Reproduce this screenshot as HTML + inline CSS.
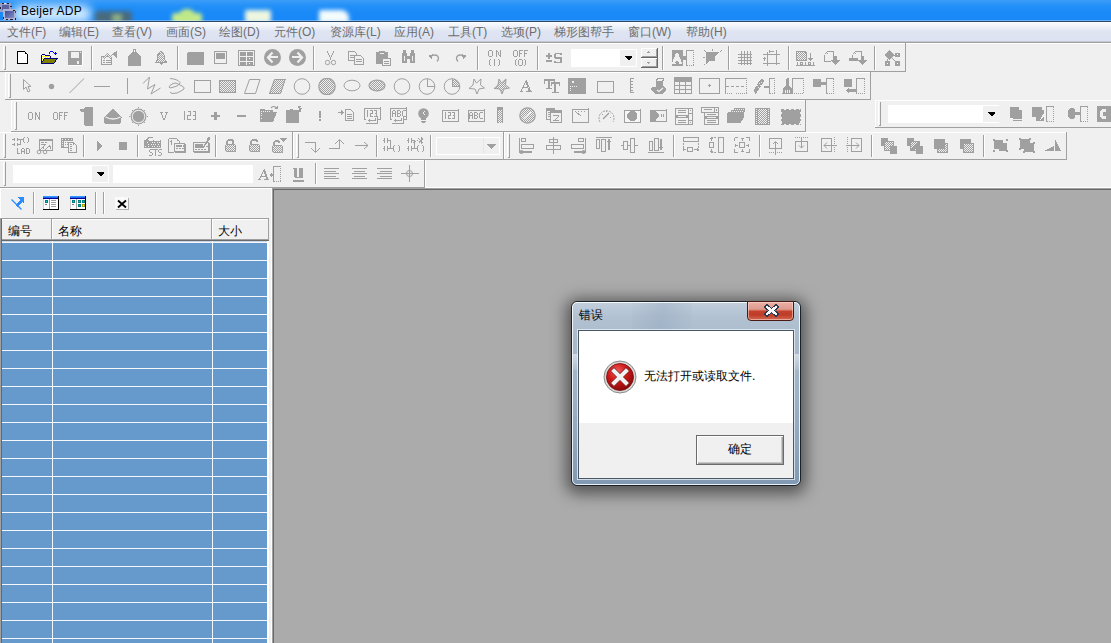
<!DOCTYPE html><html><head><meta charset="utf-8"><style>
html,body{margin:0;padding:0}
body{width:1111px;height:643px;position:relative;overflow:hidden;background:#f0f0f0;font-family:"Liberation Sans",sans-serif}
</style></head><body>
<div style="position:absolute;left:0;top:0;width:1111px;height:22px;overflow:hidden;background:linear-gradient(#3c9cf8 0px,#2290f8 6px,#1a8af8 12px,#1888f8 20px);">
<div style="position:absolute;left:12px;top:5px;width:80px;height:18px;border-radius:9px;background:rgba(235,248,255,0.85);filter:blur(5px)"></div>
<div style="position:absolute;left:95px;top:11px;width:37px;height:12px;border-radius:3px;background:#56625c;filter:blur(2.5px);opacity:.8"></div>
<div style="position:absolute;left:112px;top:14px;width:10px;height:8px;background:#aacc88;filter:blur(2px);opacity:.7"></div>
<div style="position:absolute;left:172px;top:13px;width:30px;height:10px;border-radius:3px;background:#c8ec8a;filter:blur(2px)"></div>
<div style="position:absolute;left:180px;top:9px;width:14px;height:10px;border-radius:50% 50% 0 0;background:#c0e888;filter:blur(2px)"></div>
<div style="position:absolute;left:245px;top:10px;width:26px;height:13px;border-radius:2px;background:#eef6e0;filter:blur(2px)"></div>
<div style="position:absolute;left:319px;top:10px;width:30px;height:13px;border-radius:2px 8px 0 0;background:#f4fbfc;filter:blur(2px)"></div>
<div style="position:absolute;left:0;top:20px;width:1111px;height:1px;background:rgba(255,255,255,0.35)"></div>
</div>
<div style="position:absolute;left:0px;top:21px;width:1111px;height:1px;background:#2c4a6a"></div>
<svg style="position:absolute;left:0px;top:2px" width="17" height="18" viewBox="0 0 17 18" shape-rendering="crispEdges" ><defs><linearGradient id="tsg" x1="0" y1="0" x2="1" y2="1"><stop offset="0" stop-color="#404a90"/><stop offset="1" stop-color="#8090c8"/></linearGradient></defs>
<rect x="0" y="1" width="11" height="9" fill="#9aa0c8"/><rect x="2" y="3" width="7" height="5" fill="#5a62a0"/><rect x="3" y="1" width="3" height="1" fill="#e8e8f8"/>
<rect x="3" y="7" width="13" height="11" fill="#aeb2d4"/><rect x="5" y="9" width="9" height="7" fill="url(#tsg)"/>
<rect x="2" y="1" width="2" height="1" fill="#202030"/><rect x="7" y="1" width="2" height="1" fill="#202030"/><rect x="0" y="5" width="1" height="2" fill="#202030"/><rect x="10" y="4" width="2" height="1" fill="#202030"/>
<rect x="3" y="15" width="1" height="2" fill="#202030"/><rect x="6" y="17" width="2" height="1" fill="#202030"/><rect x="10" y="17" width="3" height="1" fill="#202030"/><rect x="15" y="9" width="1" height="2" fill="#404050"/><rect x="15" y="16" width="1" height="2" fill="#202030"/><rect x="13" y="8" width="2" height="1" fill="#202030"/></svg>
<div style="position:absolute;left:21px;top:4px;white-space:nowrap;font-size:12px;color:#000;letter-spacing:0.3px">Beijer ADP</div>
<div style="position:absolute;left:0px;top:22px;width:1111px;height:19px;background:linear-gradient(#fbfcfe 0px,#eef1f8 5px,#e0e5f3 9px,#dce2f1 18px)"></div>
<div style="position:absolute;left:0px;top:41px;width:1111px;height:1px;background:#c4c8d0"></div>
<div style="position:absolute;left:0px;top:42px;width:1111px;height:1px;background:#a0a0a0"></div>
<div style="position:absolute;left:7px;top:24px;white-space:nowrap;font-size:12px;line-height:16px;color:#6d6d6d;">文件(F)</div>
<div style="position:absolute;left:59px;top:24px;white-space:nowrap;font-size:12px;line-height:16px;color:#6d6d6d;">编辑(E)</div>
<div style="position:absolute;left:112px;top:24px;white-space:nowrap;font-size:12px;line-height:16px;color:#6d6d6d;">查看(V)</div>
<div style="position:absolute;left:166px;top:24px;white-space:nowrap;font-size:12px;line-height:16px;color:#6d6d6d;">画面(S)</div>
<div style="position:absolute;left:219px;top:24px;white-space:nowrap;font-size:12px;line-height:16px;color:#6d6d6d;">绘图(D)</div>
<div style="position:absolute;left:274px;top:24px;white-space:nowrap;font-size:12px;line-height:16px;color:#6d6d6d;">元件(O)</div>
<div style="position:absolute;left:330px;top:24px;white-space:nowrap;font-size:12px;line-height:16px;color:#6d6d6d;">资源库(L)</div>
<div style="position:absolute;left:394px;top:24px;white-space:nowrap;font-size:12px;line-height:16px;color:#6d6d6d;">应用(A)</div>
<div style="position:absolute;left:448px;top:24px;white-space:nowrap;font-size:12px;line-height:16px;color:#6d6d6d;">工具(T)</div>
<div style="position:absolute;left:501px;top:24px;white-space:nowrap;font-size:12px;line-height:16px;color:#6d6d6d;">选项(P)</div>
<div style="position:absolute;left:554px;top:24px;white-space:nowrap;font-size:12px;line-height:16px;color:#6d6d6d;">梯形图帮手</div>
<div style="position:absolute;left:628px;top:24px;white-space:nowrap;font-size:12px;line-height:16px;color:#6d6d6d;">窗口(W)</div>
<div style="position:absolute;left:686px;top:24px;white-space:nowrap;font-size:12px;line-height:16px;color:#6d6d6d;">帮助(H)</div>
<div style="position:absolute;left:0px;top:43px;width:1111px;height:1px;background:#fff"></div>
<div style="position:absolute;left:0px;top:71px;width:906px;height:1px;background:#a0a0a0"></div>
<div style="position:absolute;left:905px;top:43px;width:1px;height:29px;background:#a0a0a0"></div>
<div style="position:absolute;left:3px;top:46px;width:1px;height:23px;background:#fff"></div>
<div style="position:absolute;left:3px;top:46px;width:2px;height:1px;background:#fff"></div>
<div style="position:absolute;left:5px;top:46px;width:1px;height:24px;background:#a0a0a0"></div>
<div style="position:absolute;left:4px;top:69px;width:1px;height:1px;background:#a0a0a0"></div>
<div style="position:absolute;left:5px;top:72px;width:865px;height:1px;background:#fff"></div>
<div style="position:absolute;left:5px;top:72px;width:1px;height:27px;background:#fff"></div>
<div style="position:absolute;left:870px;top:72px;width:1px;height:28px;background:#a0a0a0"></div>
<div style="position:absolute;left:5px;top:99px;width:866px;height:1px;background:#a0a0a0"></div>
<div style="position:absolute;left:8px;top:74px;width:1px;height:23px;background:#fff"></div>
<div style="position:absolute;left:8px;top:74px;width:2px;height:1px;background:#fff"></div>
<div style="position:absolute;left:10px;top:74px;width:1px;height:24px;background:#a0a0a0"></div>
<div style="position:absolute;left:9px;top:97px;width:1px;height:1px;background:#a0a0a0"></div>
<div style="position:absolute;left:11px;top:100px;width:794px;height:1px;background:#fff"></div>
<div style="position:absolute;left:11px;top:100px;width:1px;height:31px;background:#fff"></div>
<div style="position:absolute;left:805px;top:100px;width:1px;height:32px;background:#a0a0a0"></div>
<div style="position:absolute;left:11px;top:131px;width:795px;height:1px;background:#a0a0a0"></div>
<div style="position:absolute;left:14px;top:102px;width:1px;height:27px;background:#fff"></div>
<div style="position:absolute;left:14px;top:102px;width:2px;height:1px;background:#fff"></div>
<div style="position:absolute;left:16px;top:102px;width:1px;height:28px;background:#a0a0a0"></div>
<div style="position:absolute;left:15px;top:129px;width:1px;height:1px;background:#a0a0a0"></div>
<div style="position:absolute;left:875px;top:100px;width:237px;height:1px;background:#fff"></div>
<div style="position:absolute;left:875px;top:100px;width:1px;height:27px;background:#fff"></div>
<div style="position:absolute;left:1112px;top:100px;width:1px;height:28px;background:#a0a0a0"></div>
<div style="position:absolute;left:875px;top:127px;width:238px;height:1px;background:#a0a0a0"></div>
<div style="position:absolute;left:878px;top:102px;width:1px;height:23px;background:#fff"></div>
<div style="position:absolute;left:878px;top:102px;width:2px;height:1px;background:#fff"></div>
<div style="position:absolute;left:880px;top:102px;width:1px;height:24px;background:#a0a0a0"></div>
<div style="position:absolute;left:879px;top:125px;width:1px;height:1px;background:#a0a0a0"></div>
<div style="position:absolute;left:0px;top:132px;width:1066px;height:1px;background:#fff"></div>
<div style="position:absolute;left:0px;top:159px;width:1066px;height:1px;background:#a0a0a0"></div>
<div style="position:absolute;left:1066px;top:132px;width:1px;height:28px;background:#a0a0a0"></div>
<div style="position:absolute;left:3px;top:134px;width:1px;height:23px;background:#fff"></div>
<div style="position:absolute;left:3px;top:134px;width:2px;height:1px;background:#fff"></div>
<div style="position:absolute;left:5px;top:134px;width:1px;height:24px;background:#a0a0a0"></div>
<div style="position:absolute;left:4px;top:157px;width:1px;height:1px;background:#a0a0a0"></div>
<div style="position:absolute;left:292px;top:132px;width:1px;height:27px;background:#a0a0a0"></div>
<div style="position:absolute;left:293px;top:132px;width:1px;height:27px;background:#fff"></div>
<div style="position:absolute;left:296px;top:134px;width:1px;height:23px;background:#fff"></div>
<div style="position:absolute;left:296px;top:134px;width:2px;height:1px;background:#fff"></div>
<div style="position:absolute;left:298px;top:134px;width:1px;height:24px;background:#a0a0a0"></div>
<div style="position:absolute;left:297px;top:157px;width:1px;height:1px;background:#a0a0a0"></div>
<div style="position:absolute;left:503px;top:132px;width:1px;height:27px;background:#a0a0a0"></div>
<div style="position:absolute;left:504px;top:132px;width:1px;height:27px;background:#fff"></div>
<div style="position:absolute;left:507px;top:134px;width:1px;height:23px;background:#fff"></div>
<div style="position:absolute;left:507px;top:134px;width:2px;height:1px;background:#fff"></div>
<div style="position:absolute;left:509px;top:134px;width:1px;height:24px;background:#a0a0a0"></div>
<div style="position:absolute;left:508px;top:157px;width:1px;height:1px;background:#a0a0a0"></div>
<div style="position:absolute;left:0px;top:160px;width:424px;height:1px;background:#fff"></div>
<div style="position:absolute;left:0px;top:187px;width:425px;height:1px;background:#a0a0a0"></div>
<div style="position:absolute;left:425px;top:187px;width:686px;height:1px;background:#fff"></div>
<div style="position:absolute;left:424px;top:160px;width:1px;height:27px;background:#a0a0a0"></div>
<div style="position:absolute;left:425px;top:160px;width:1px;height:27px;background:#fff"></div>
<div style="position:absolute;left:3px;top:162px;width:1px;height:23px;background:#fff"></div>
<div style="position:absolute;left:3px;top:162px;width:2px;height:1px;background:#fff"></div>
<div style="position:absolute;left:5px;top:162px;width:1px;height:24px;background:#a0a0a0"></div>
<div style="position:absolute;left:4px;top:185px;width:1px;height:1px;background:#a0a0a0"></div>
<svg width="0" height="0" style="position:absolute"><defs><pattern id="hp" width="2" height="2" patternUnits="userSpaceOnUse"><rect width="2" height="2" fill="#f0f0f0"/><rect width="1" height="1" fill="#a0a0a0"/><rect x="1" y="1" width="1" height="1" fill="#a0a0a0"/></pattern><pattern id="hy" width="2" height="2" patternUnits="userSpaceOnUse"><rect width="2" height="2" fill="#ffff00"/><rect width="1" height="1" fill="#ffffff"/><rect x="1" y="1" width="1" height="1" fill="#ffffff"/></pattern></defs></svg>
<div style="position:absolute;left:91px;top:46px;width:1px;height:24px;background:#a0a0a0"></div>
<div style="position:absolute;left:92px;top:46px;width:1px;height:24px;background:#fff"></div>
<div style="position:absolute;left:177px;top:46px;width:1px;height:24px;background:#a0a0a0"></div>
<div style="position:absolute;left:178px;top:46px;width:1px;height:24px;background:#fff"></div>
<div style="position:absolute;left:313px;top:46px;width:1px;height:24px;background:#a0a0a0"></div>
<div style="position:absolute;left:314px;top:46px;width:1px;height:24px;background:#fff"></div>
<div style="position:absolute;left:477px;top:46px;width:1px;height:24px;background:#a0a0a0"></div>
<div style="position:absolute;left:478px;top:46px;width:1px;height:24px;background:#fff"></div>
<div style="position:absolute;left:537px;top:46px;width:1px;height:24px;background:#a0a0a0"></div>
<div style="position:absolute;left:538px;top:46px;width:1px;height:24px;background:#fff"></div>
<div style="position:absolute;left:662px;top:46px;width:1px;height:24px;background:#a0a0a0"></div>
<div style="position:absolute;left:663px;top:46px;width:1px;height:24px;background:#fff"></div>
<div style="position:absolute;left:728px;top:46px;width:1px;height:24px;background:#a0a0a0"></div>
<div style="position:absolute;left:729px;top:46px;width:1px;height:24px;background:#fff"></div>
<div style="position:absolute;left:788px;top:46px;width:1px;height:24px;background:#a0a0a0"></div>
<div style="position:absolute;left:789px;top:46px;width:1px;height:24px;background:#fff"></div>
<div style="position:absolute;left:874px;top:46px;width:1px;height:24px;background:#a0a0a0"></div>
<div style="position:absolute;left:875px;top:46px;width:1px;height:24px;background:#fff"></div>
<svg style="position:absolute;left:17px;top:51px" width="12" height="14" viewBox="0 0 12 14" shape-rendering="crispEdges" ><path d="M0.5,0.5 H7.5 L10.5,3.5 V12.5 H0.5 Z" fill="#fff" stroke="#000" stroke-width="1" /><rect x="8" y="2" width="1" height="1" fill="#000"/></svg>
<svg style="position:absolute;left:41px;top:51px" width="17" height="13" viewBox="0 0 17 13" shape-rendering="crispEdges" ><rect x="9" y="0" width="1" height="1" fill="#0000ff"/><rect x="10" y="0" width="1" height="1" fill="#0000ff"/><rect x="11" y="0" width="1" height="1" fill="#0000ff"/><rect x="8" y="1" width="1" height="1" fill="#0000ff"/><rect x="12" y="1" width="1" height="1" fill="#0000ff"/><rect x="14" y="1" width="1" height="1" fill="#0000ff"/><rect x="8" y="2" width="1" height="1" fill="#0000ff"/><rect x="13" y="2" width="1" height="1" fill="#0000ff"/><rect x="14" y="2" width="1" height="1" fill="#0000ff"/><rect x="15" y="2" width="1" height="1" fill="#0000ff"/><rect x="1" y="3" width="1" height="1" fill="#000080"/><rect x="2" y="3" width="1" height="1" fill="#000080"/><rect x="3" y="3" width="1" height="1" fill="#000080"/><rect x="14" y="3" width="1" height="1" fill="#0000ff"/><rect x="0" y="4" width="1" height="1" fill="#000080"/><rect x="1" y="4" width="1" height="1" fill="#ffffff"/><rect x="2" y="4" width="1" height="1" fill="#ffff00"/><rect x="3" y="4" width="1" height="1" fill="#ffffff"/><rect x="4" y="4" width="1" height="1" fill="#000080"/><rect x="5" y="4" width="1" height="1" fill="#000080"/><rect x="6" y="4" width="1" height="1" fill="#000080"/><rect x="7" y="4" width="1" height="1" fill="#000080"/><rect x="8" y="4" width="1" height="1" fill="#000080"/><rect x="0" y="5" width="1" height="1" fill="#000080"/><rect x="1" y="5" width="1" height="1" fill="#ffff00"/><rect x="2" y="5" width="1" height="1" fill="#ffffff"/><rect x="3" y="5" width="1" height="1" fill="#ffff00"/><rect x="4" y="5" width="1" height="1" fill="#ffffff"/><rect x="5" y="5" width="1" height="1" fill="#ffff00"/><rect x="6" y="5" width="1" height="1" fill="#ffffff"/><rect x="7" y="5" width="1" height="1" fill="#ffff00"/><rect x="8" y="5" width="1" height="1" fill="#ffffff"/><rect x="9" y="5" width="1" height="1" fill="#000080"/><rect x="0" y="6" width="1" height="1" fill="#000080"/><rect x="1" y="6" width="1" height="1" fill="#ffffff"/><rect x="2" y="6" width="1" height="1" fill="#ffff00"/><rect x="3" y="6" width="1" height="1" fill="#ffffff"/><rect x="4" y="6" width="1" height="1" fill="#ffff00"/><rect x="5" y="6" width="1" height="1" fill="#ffffff"/><rect x="6" y="6" width="1" height="1" fill="#ffff00"/><rect x="7" y="6" width="1" height="1" fill="#ffffff"/><rect x="8" y="6" width="1" height="1" fill="#ffff00"/><rect x="9" y="6" width="1" height="1" fill="#000080"/><rect x="0" y="7" width="1" height="1" fill="#000080"/><rect x="1" y="7" width="1" height="1" fill="#ffff00"/><rect x="2" y="7" width="1" height="1" fill="#ffffff"/><rect x="3" y="7" width="1" height="1" fill="#000080"/><rect x="4" y="7" width="1" height="1" fill="#000080"/><rect x="5" y="7" width="1" height="1" fill="#000080"/><rect x="6" y="7" width="1" height="1" fill="#000080"/><rect x="7" y="7" width="1" height="1" fill="#000080"/><rect x="8" y="7" width="1" height="1" fill="#000080"/><rect x="9" y="7" width="1" height="1" fill="#000080"/><rect x="10" y="7" width="1" height="1" fill="#000080"/><rect x="11" y="7" width="1" height="1" fill="#000080"/><rect x="12" y="7" width="1" height="1" fill="#000080"/><rect x="13" y="7" width="1" height="1" fill="#000080"/><rect x="14" y="7" width="1" height="1" fill="#000080"/><rect x="15" y="7" width="1" height="1" fill="#000080"/><rect x="16" y="7" width="1" height="1" fill="#000080"/><rect x="0" y="8" width="1" height="1" fill="#000080"/><rect x="1" y="8" width="1" height="1" fill="#ffffff"/><rect x="2" y="8" width="1" height="1" fill="#000080"/><rect x="3" y="8" width="1" height="1" fill="#808000"/><rect x="4" y="8" width="1" height="1" fill="#808000"/><rect x="5" y="8" width="1" height="1" fill="#808000"/><rect x="6" y="8" width="1" height="1" fill="#808000"/><rect x="7" y="8" width="1" height="1" fill="#808000"/><rect x="8" y="8" width="1" height="1" fill="#808000"/><rect x="9" y="8" width="1" height="1" fill="#808000"/><rect x="10" y="8" width="1" height="1" fill="#808000"/><rect x="11" y="8" width="1" height="1" fill="#808000"/><rect x="12" y="8" width="1" height="1" fill="#808000"/><rect x="13" y="8" width="1" height="1" fill="#808000"/><rect x="14" y="8" width="1" height="1" fill="#808000"/><rect x="15" y="8" width="1" height="1" fill="#000080"/><rect x="0" y="9" width="1" height="1" fill="#000080"/><rect x="1" y="9" width="1" height="1" fill="#ffff00"/><rect x="2" y="9" width="1" height="1" fill="#000080"/><rect x="3" y="9" width="1" height="1" fill="#808000"/><rect x="4" y="9" width="1" height="1" fill="#808000"/><rect x="5" y="9" width="1" height="1" fill="#808000"/><rect x="6" y="9" width="1" height="1" fill="#808000"/><rect x="7" y="9" width="1" height="1" fill="#808000"/><rect x="8" y="9" width="1" height="1" fill="#808000"/><rect x="9" y="9" width="1" height="1" fill="#808000"/><rect x="10" y="9" width="1" height="1" fill="#808000"/><rect x="11" y="9" width="1" height="1" fill="#808000"/><rect x="12" y="9" width="1" height="1" fill="#808000"/><rect x="13" y="9" width="1" height="1" fill="#808000"/><rect x="14" y="9" width="1" height="1" fill="#000080"/><rect x="0" y="10" width="1" height="1" fill="#000080"/><rect x="1" y="10" width="1" height="1" fill="#000080"/><rect x="2" y="10" width="1" height="1" fill="#808000"/><rect x="3" y="10" width="1" height="1" fill="#808000"/><rect x="4" y="10" width="1" height="1" fill="#808000"/><rect x="5" y="10" width="1" height="1" fill="#808000"/><rect x="6" y="10" width="1" height="1" fill="#808000"/><rect x="7" y="10" width="1" height="1" fill="#808000"/><rect x="8" y="10" width="1" height="1" fill="#808000"/><rect x="9" y="10" width="1" height="1" fill="#808000"/><rect x="10" y="10" width="1" height="1" fill="#808000"/><rect x="11" y="10" width="1" height="1" fill="#808000"/><rect x="12" y="10" width="1" height="1" fill="#808000"/><rect x="13" y="10" width="1" height="1" fill="#808000"/><rect x="14" y="10" width="1" height="1" fill="#000080"/><rect x="0" y="11" width="1" height="1" fill="#000080"/><rect x="1" y="11" width="1" height="1" fill="#808000"/><rect x="2" y="11" width="1" height="1" fill="#808000"/><rect x="3" y="11" width="1" height="1" fill="#808000"/><rect x="4" y="11" width="1" height="1" fill="#808000"/><rect x="5" y="11" width="1" height="1" fill="#808000"/><rect x="6" y="11" width="1" height="1" fill="#808000"/><rect x="7" y="11" width="1" height="1" fill="#808000"/><rect x="8" y="11" width="1" height="1" fill="#808000"/><rect x="9" y="11" width="1" height="1" fill="#808000"/><rect x="10" y="11" width="1" height="1" fill="#808000"/><rect x="11" y="11" width="1" height="1" fill="#808000"/><rect x="12" y="11" width="1" height="1" fill="#808000"/><rect x="13" y="11" width="1" height="1" fill="#000080"/><rect x="0" y="12" width="1" height="1" fill="#000080"/><rect x="1" y="12" width="1" height="1" fill="#000080"/><rect x="2" y="12" width="1" height="1" fill="#000080"/><rect x="3" y="12" width="1" height="1" fill="#000080"/><rect x="4" y="12" width="1" height="1" fill="#000080"/><rect x="5" y="12" width="1" height="1" fill="#000080"/><rect x="6" y="12" width="1" height="1" fill="#000080"/><rect x="7" y="12" width="1" height="1" fill="#000080"/><rect x="8" y="12" width="1" height="1" fill="#000080"/><rect x="9" y="12" width="1" height="1" fill="#000080"/><rect x="10" y="12" width="1" height="1" fill="#000080"/><rect x="11" y="12" width="1" height="1" fill="#000080"/><rect x="12" y="12" width="1" height="1" fill="#000080"/></svg>
<svg style="position:absolute;left:68px;top:51px" width="15" height="15" viewBox="0 0 15 15" shape-rendering="crispEdges" ><rect x="0" y="0" width="14" height="14" fill="#a0a0a0"/><rect x="3" y="1" width="8" height="6" fill="#f0f0f0"/><rect x="9" y="10" width="2" height="3" fill="#f0f0f0"/><rect x="12" y="1" width="1" height="1" fill="#f0f0f0"/><rect x="1" y="14" width="14" height="1" fill="#fff"/><rect x="14" y="1" width="1" height="14" fill="#fff"/></svg>
<svg style="position:absolute;left:101px;top:51px" width="17" height="15" viewBox="0 0 17 15" shape-rendering="crispEdges" ><path d="M0.5,5.5 H10.5 V13.5 H0.5 Z" fill="none" stroke="#a0a0a0" stroke-width="1" /><rect x="2" y="9" width="2" height="1" fill="#a0a0a0"/><rect x="5" y="9" width="5" height="1" fill="#a0a0a0"/><rect x="2" y="11" width="2" height="1" fill="#a0a0a0"/><rect x="5" y="11" width="5" height="1" fill="#a0a0a0"/><path d="M2,7 L6,2 L9,5 L12,3 L11,6 L9,8 L6,5 L3,8 Z" fill="url(#hp)"/><path d="M11,3 L16,0 V7 Z" fill="#a0a0a0"/></svg>
<svg style="position:absolute;left:128px;top:49px" width="14" height="18" viewBox="0 0 14 18" shape-rendering="crispEdges" ><path d="M5,0 H8 V3 L13,7 V17 H0 V7 L5,3 Z" fill="#a0a0a0"/><rect x="6" y="1" width="1" height="2" fill="#fff"/></svg>
<svg style="position:absolute;left:154px;top:51px" width="14" height="15" viewBox="0 0 14 15" shape-rendering="crispEdges" ><path d="M6,0 H8 L11,4 V8 L13,11 V12 H9 L7,14 L5,12 H1 V11 L3,8 V4 Z" fill="url(#hp)"/><path d="M6.5,0.5 H7.5 L10.5,4.5 V8.5 L12.5,11.5 H1.5 L3.5,8.5 V4.5 Z" fill="none" stroke="#a0a0a0" stroke-width="1" /><path d="M5,12 H9 L7,14 Z" fill="#a0a0a0"/></svg>
<svg style="position:absolute;left:187px;top:52px" width="17" height="13" viewBox="0 0 17 13" shape-rendering="crispEdges" ><path d="M1,0 H16 L17,1 V13 H0 V1 Z" fill="#a0a0a0"/></svg>
<svg style="position:absolute;left:214px;top:51px" width="13" height="14" viewBox="0 0 13 14" shape-rendering="crispEdges" ><path d="M0.5,0.5 H12.5 V12.5 H0.5 Z" fill="none" stroke="#a0a0a0" stroke-width="1" /><rect x="2" y="2" width="9" height="6" fill="#a0a0a0"/></svg>
<svg style="position:absolute;left:238px;top:50px" width="17" height="16" viewBox="0 0 17 16" shape-rendering="crispEdges" ><path d="M0.5,0.5 H16.5 V15.5 H0.5 Z" fill="none" stroke="#a0a0a0" stroke-width="1" /><rect x="2" y="2" width="6" height="4" fill="#a0a0a0"/><rect x="9" y="2" width="6" height="4" fill="#a0a0a0"/><rect x="2" y="7" width="6" height="4" fill="#a0a0a0"/><rect x="9" y="7" width="6" height="4" fill="#a0a0a0"/><rect x="2" y="12" width="6" height="3" fill="#a0a0a0"/><rect x="9" y="12" width="6" height="3" fill="#a0a0a0"/><rect x="11" y="8" width="1" height="1" fill="#fff"/><rect x="11" y="13" width="1" height="1" fill="#fff"/></svg>
<svg style="position:absolute;left:264px;top:49px" width="17" height="17" viewBox="0 0 17 17" shape-rendering="crispEdges" ><circle cx="8.5" cy="8.5" r="8.5" fill="#a0a0a0" shape-rendering="auto"/><path d="M8.5,3.5 L4,8.5 L8.5,13.5" fill="none" stroke="#f0f0f0" stroke-width="2.2" shape-rendering="auto"/><rect x="5" y="7" width="9" height="2" fill="#f0f0f0"/></svg>
<svg style="position:absolute;left:289px;top:49px" width="17" height="17" viewBox="0 0 17 17" shape-rendering="crispEdges" ><circle cx="8.5" cy="8.5" r="8.5" fill="#a0a0a0" shape-rendering="auto"/><path d="M8.5,3.5 L13,8.5 L8.5,13.5" fill="none" stroke="#f0f0f0" stroke-width="2.2" shape-rendering="auto"/><rect x="3" y="7" width="9" height="2" fill="#f0f0f0"/></svg>
<svg style="position:absolute;left:325px;top:51px" width="11" height="15" viewBox="0 0 11 15" shape-rendering="crispEdges" ><path d="M2.5,0.5 L5.5,7.5 L8.5,0.5" fill="none" stroke="#a0a0a0" stroke-width="1" /><rect x="5" y="7" width="1" height="2" fill="#a0a0a0"/><circle cx="2.5" cy="11.5" r="2.2" fill="none" stroke="#a0a0a0" shape-rendering="auto"/><circle cx="8.5" cy="11.5" r="2.2" fill="none" stroke="#a0a0a0" shape-rendering="auto"/></svg>
<svg style="position:absolute;left:348px;top:51px" width="17" height="14" viewBox="0 0 17 14" shape-rendering="crispEdges" ><path d="M0.5,0.5 H6.5 L8.5,2.5 V9.5 H0.5 Z" fill="none" stroke="#a0a0a0" stroke-width="1" /><rect x="2" y="4" width="4" height="1" fill="#a0a0a0"/><rect x="2" y="6" width="4" height="1" fill="#a0a0a0"/><path d="M6,4 H13 L16,7 V14 H6 Z" fill="#f0f0f0"/><path d="M6.5,4.5 H12.5 L15.5,7.5 V13.5 H6.5 Z" fill="none" stroke="#a0a0a0" stroke-width="1" /><rect x="8" y="8" width="6" height="1" fill="#a0a0a0"/><rect x="8" y="10" width="6" height="1" fill="#a0a0a0"/></svg>
<svg style="position:absolute;left:375px;top:51px" width="17" height="15" viewBox="0 0 17 15" shape-rendering="crispEdges" ><path d="M1,1 H4 V0 H10 V1 H13 V13 H1 Z" fill="#a0a0a0"/><rect x="5" y="2" width="4" height="1" fill="#f0f0f0"/><path d="M7,7 H15 V14 H7 Z" fill="#f0f0f0"/><path d="M7.5,7.5 H15.5 V14.5 H7.5 Z" fill="none" stroke="#a0a0a0" stroke-width="1" /><rect x="9" y="10" width="5" height="1" fill="#a0a0a0"/><rect x="9" y="12" width="5" height="1" fill="#a0a0a0"/></svg>
<svg style="position:absolute;left:401px;top:50px" width="16" height="14" viewBox="0 0 16 14" shape-rendering="crispEdges" ><rect x="2" y="0" width="3" height="3" fill="#a0a0a0"/><rect x="10" y="0" width="3" height="3" fill="#a0a0a0"/><path d="M1,3 H6 V6 H9 V3 H14 V13 H9 V9 H6 V13 H1 Z" fill="#a0a0a0"/><rect x="3" y="6" width="1" height="5" fill="#f0f0f0"/><rect x="11" y="6" width="1" height="5" fill="#f0f0f0"/></svg>
<svg style="position:absolute;left:427px;top:53px" width="14" height="10" viewBox="0 0 14 10" shape-rendering="crispEdges" ><path d="M3.5,3.5 Q7,1 10,2.5 Q13,5 10,8.5" fill="none" stroke="#a0a0a0" stroke-width="1.4" shape-rendering="auto"/><path d="M1,3 L6,1 L5,6 Z" fill="#a0a0a0"/></svg>
<svg style="position:absolute;left:454px;top:53px" width="14" height="10" viewBox="0 0 14 10" shape-rendering="crispEdges" ><path d="M10.5,3.5 Q7,1 4,2.5 Q1,5 4,8.5" fill="none" stroke="#a0a0a0" stroke-width="1.4" shape-rendering="auto"/><path d="M13,3 L8,1 L9,6 Z" fill="#a0a0a0"/></svg>
<svg style="position:absolute;left:488px;top:50px" width="14" height="16" viewBox="0 0 14 16" shape-rendering="crispEdges" ><rect x="1" y="0" width="3" height="1" fill="#a0a0a0"/><rect x="8" y="0" width="1" height="1" fill="#a0a0a0"/><rect x="12" y="0" width="1" height="1" fill="#a0a0a0"/><rect x="0" y="1" width="1" height="1" fill="#a0a0a0"/><rect x="4" y="1" width="1" height="1" fill="#a0a0a0"/><rect x="8" y="1" width="2" height="1" fill="#a0a0a0"/><rect x="12" y="1" width="1" height="1" fill="#a0a0a0"/><rect x="0" y="2" width="1" height="1" fill="#a0a0a0"/><rect x="4" y="2" width="1" height="1" fill="#a0a0a0"/><rect x="8" y="2" width="1" height="1" fill="#a0a0a0"/><rect x="10" y="2" width="1" height="1" fill="#a0a0a0"/><rect x="12" y="2" width="1" height="1" fill="#a0a0a0"/><rect x="0" y="3" width="1" height="1" fill="#a0a0a0"/><rect x="4" y="3" width="1" height="1" fill="#a0a0a0"/><rect x="8" y="3" width="1" height="1" fill="#a0a0a0"/><rect x="10" y="3" width="1" height="1" fill="#a0a0a0"/><rect x="12" y="3" width="1" height="1" fill="#a0a0a0"/><rect x="0" y="4" width="1" height="1" fill="#a0a0a0"/><rect x="4" y="4" width="1" height="1" fill="#a0a0a0"/><rect x="8" y="4" width="1" height="1" fill="#a0a0a0"/><rect x="10" y="4" width="1" height="1" fill="#a0a0a0"/><rect x="12" y="4" width="1" height="1" fill="#a0a0a0"/><rect x="0" y="5" width="1" height="1" fill="#a0a0a0"/><rect x="4" y="5" width="1" height="1" fill="#a0a0a0"/><rect x="8" y="5" width="1" height="1" fill="#a0a0a0"/><rect x="11" y="5" width="2" height="1" fill="#a0a0a0"/><rect x="1" y="6" width="3" height="1" fill="#a0a0a0"/><rect x="8" y="6" width="1" height="1" fill="#a0a0a0"/><rect x="12" y="6" width="1" height="1" fill="#a0a0a0"/><rect x="2" y="9" width="1" height="1" fill="#a0a0a0"/><rect x="6" y="9" width="1" height="1" fill="#a0a0a0"/><rect x="10" y="9" width="1" height="1" fill="#a0a0a0"/><rect x="1" y="10" width="1" height="1" fill="#a0a0a0"/><rect x="6" y="10" width="1" height="1" fill="#a0a0a0"/><rect x="11" y="10" width="1" height="1" fill="#a0a0a0"/><rect x="1" y="11" width="1" height="1" fill="#a0a0a0"/><rect x="6" y="11" width="1" height="1" fill="#a0a0a0"/><rect x="11" y="11" width="1" height="1" fill="#a0a0a0"/><rect x="1" y="12" width="1" height="1" fill="#a0a0a0"/><rect x="6" y="12" width="1" height="1" fill="#a0a0a0"/><rect x="11" y="12" width="1" height="1" fill="#a0a0a0"/><rect x="1" y="13" width="1" height="1" fill="#a0a0a0"/><rect x="6" y="13" width="1" height="1" fill="#a0a0a0"/><rect x="11" y="13" width="1" height="1" fill="#a0a0a0"/><rect x="1" y="14" width="1" height="1" fill="#a0a0a0"/><rect x="6" y="14" width="1" height="1" fill="#a0a0a0"/><rect x="11" y="14" width="1" height="1" fill="#a0a0a0"/><rect x="2" y="15" width="1" height="1" fill="#a0a0a0"/><rect x="6" y="15" width="1" height="1" fill="#a0a0a0"/><rect x="10" y="15" width="1" height="1" fill="#a0a0a0"/></svg>
<svg style="position:absolute;left:513px;top:50px" width="16" height="16" viewBox="0 0 16 16" shape-rendering="crispEdges" ><rect x="1" y="0" width="3" height="1" fill="#a0a0a0"/><rect x="6" y="0" width="4" height="1" fill="#a0a0a0"/><rect x="11" y="0" width="4" height="1" fill="#a0a0a0"/><rect x="0" y="1" width="1" height="1" fill="#a0a0a0"/><rect x="4" y="1" width="1" height="1" fill="#a0a0a0"/><rect x="6" y="1" width="1" height="1" fill="#a0a0a0"/><rect x="11" y="1" width="1" height="1" fill="#a0a0a0"/><rect x="0" y="2" width="1" height="1" fill="#a0a0a0"/><rect x="4" y="2" width="1" height="1" fill="#a0a0a0"/><rect x="6" y="2" width="1" height="1" fill="#a0a0a0"/><rect x="11" y="2" width="1" height="1" fill="#a0a0a0"/><rect x="0" y="3" width="1" height="1" fill="#a0a0a0"/><rect x="4" y="3" width="1" height="1" fill="#a0a0a0"/><rect x="6" y="3" width="3" height="1" fill="#a0a0a0"/><rect x="11" y="3" width="3" height="1" fill="#a0a0a0"/><rect x="0" y="4" width="1" height="1" fill="#a0a0a0"/><rect x="4" y="4" width="1" height="1" fill="#a0a0a0"/><rect x="6" y="4" width="1" height="1" fill="#a0a0a0"/><rect x="11" y="4" width="1" height="1" fill="#a0a0a0"/><rect x="0" y="5" width="1" height="1" fill="#a0a0a0"/><rect x="4" y="5" width="1" height="1" fill="#a0a0a0"/><rect x="6" y="5" width="1" height="1" fill="#a0a0a0"/><rect x="11" y="5" width="1" height="1" fill="#a0a0a0"/><rect x="1" y="6" width="3" height="1" fill="#a0a0a0"/><rect x="6" y="6" width="1" height="1" fill="#a0a0a0"/><rect x="11" y="6" width="1" height="1" fill="#a0a0a0"/><rect x="3" y="9" width="1" height="1" fill="#a0a0a0"/><rect x="6" y="9" width="3" height="1" fill="#a0a0a0"/><rect x="11" y="9" width="1" height="1" fill="#a0a0a0"/><rect x="2" y="10" width="1" height="1" fill="#a0a0a0"/><rect x="5" y="10" width="1" height="1" fill="#a0a0a0"/><rect x="9" y="10" width="1" height="1" fill="#a0a0a0"/><rect x="12" y="10" width="1" height="1" fill="#a0a0a0"/><rect x="2" y="11" width="1" height="1" fill="#a0a0a0"/><rect x="5" y="11" width="1" height="1" fill="#a0a0a0"/><rect x="9" y="11" width="1" height="1" fill="#a0a0a0"/><rect x="12" y="11" width="1" height="1" fill="#a0a0a0"/><rect x="2" y="12" width="1" height="1" fill="#a0a0a0"/><rect x="5" y="12" width="1" height="1" fill="#a0a0a0"/><rect x="9" y="12" width="1" height="1" fill="#a0a0a0"/><rect x="12" y="12" width="1" height="1" fill="#a0a0a0"/><rect x="2" y="13" width="1" height="1" fill="#a0a0a0"/><rect x="5" y="13" width="1" height="1" fill="#a0a0a0"/><rect x="9" y="13" width="1" height="1" fill="#a0a0a0"/><rect x="12" y="13" width="1" height="1" fill="#a0a0a0"/><rect x="2" y="14" width="1" height="1" fill="#a0a0a0"/><rect x="5" y="14" width="1" height="1" fill="#a0a0a0"/><rect x="9" y="14" width="1" height="1" fill="#a0a0a0"/><rect x="12" y="14" width="1" height="1" fill="#a0a0a0"/><rect x="3" y="15" width="1" height="1" fill="#a0a0a0"/><rect x="6" y="15" width="3" height="1" fill="#a0a0a0"/><rect x="11" y="15" width="1" height="1" fill="#a0a0a0"/></svg>
<svg style="position:absolute;left:546px;top:52px" width="18" height="12" viewBox="0 0 18 12" shape-rendering="crispEdges" ><rect x="0" y="3" width="6" height="2" fill="#a0a0a0"/><rect x="2" y="1" width="2" height="6" fill="#a0a0a0"/><rect x="0" y="8" width="6" height="2" fill="#a0a0a0"/><path d="M9,1 H16 V3 H14 V2 H10 V5 H16 V10 L15,11 H8 V9 H10 V10 H14 V7 H9 L8,6 V2 Z" fill="#a0a0a0"/></svg>
<div style="position:absolute;left:571px;top:49px;width:66px;height:18px;background:#fff"></div>
<div style="position:absolute;left:620px;top:50px;width:16px;height:16px;background:#f0f0f0"></div>
<svg style="position:absolute;left:625px;top:56px" width="8" height="4" viewBox="0 0 8 4" shape-rendering="crispEdges" ><path d="M0,0 H7 V1 L4,4 H3 L0,1 Z" fill="#000"/></svg>
<div style="position:absolute;left:641px;top:48px;width:17px;height:10px;background:#f0f0f0;box-shadow:inset -1px -1px 0 #696969, inset 1px 1px 0 #fff, inset -2px -2px 0 #a0a0a0"></div>
<div style="position:absolute;left:641px;top:58px;width:17px;height:10px;background:#f0f0f0;box-shadow:inset -1px -1px 0 #696969, inset 1px 1px 0 #fff, inset -2px -2px 0 #a0a0a0"></div>
<svg style="position:absolute;left:647px;top:51px" width="3" height="2" viewBox="0 0 3 2" shape-rendering="crispEdges" ><rect x="1" y="0" width="1" height="1" fill="#a0a0a0"/><rect x="0" y="1" width="3" height="1" fill="#a0a0a0"/></svg>
<svg style="position:absolute;left:647px;top:62px" width="3" height="2" viewBox="0 0 3 2" shape-rendering="crispEdges" ><rect x="0" y="0" width="3" height="1" fill="#a0a0a0"/><rect x="1" y="1" width="1" height="1" fill="#a0a0a0"/></svg>
<svg style="position:absolute;left:672px;top:50px" width="23" height="16" viewBox="0 0 23 16" shape-rendering="crispEdges" ><rect x="0" y="0" width="11" height="16" fill="#a0a0a0"/><path fill-rule="evenodd" fill="#f0f0f0" d="M4,3 H6 L10,13 V14 H6.5 V13 H7 L6.2,11 H3.8 L3,13 H3.5 V14 H0 V13 Z M4.4,9 H5.6 L5,7 Z"/><path d="M11,6 H14 V10 H11 Z" fill="#a0a0a0"/><rect x="14" y="0" width="1" height="16" fill="#a0a0a0"/><rect x="14" y="0" width="8" height="1" fill="#a0a0a0"/><path d="M21.5,2 V16" fill="none" stroke="#a0a0a0" stroke-width="1" stroke-dasharray="1 1"/><path d="M15,15.5 H22" fill="none" stroke="#a0a0a0" stroke-width="1" stroke-dasharray="1 1"/></svg>
<svg style="position:absolute;left:702px;top:49px" width="20" height="17" viewBox="0 0 20 17" shape-rendering="crispEdges" ><path d="M4,3 H17 L13,7 V12 H7 L4,15 Z" fill="#a0a0a0"/><rect x="10" y="0" width="1" height="2" fill="#a0a0a0"/><rect x="1" y="8" width="2" height="1" fill="#a0a0a0"/><path d="M1,1 L2,1 L4,3 L3,3 Z" fill="#a0a0a0"/><path d="M18,2 L20,1 L20,2 L18,3 Z" fill="#a0a0a0"/><path d="M1,16 L3,14 L3,15 L2,16 Z" fill="#a0a0a0"/></svg>
<svg style="position:absolute;left:738px;top:51px" width="15" height="15" viewBox="0 0 15 15" shape-rendering="crispEdges" ><rect x="3" y="0" width="1" height="14" fill="#a0a0a0"/><rect x="6" y="0" width="1" height="14" fill="#a0a0a0"/><rect x="9" y="0" width="1" height="14" fill="#a0a0a0"/><rect x="12" y="0" width="1" height="14" fill="#a0a0a0"/><rect x="0" y="3" width="14" height="1" fill="#a0a0a0"/><rect x="0" y="6" width="14" height="1" fill="#a0a0a0"/><rect x="0" y="9" width="14" height="1" fill="#a0a0a0"/><rect x="0" y="12" width="14" height="1" fill="#a0a0a0"/></svg>
<svg style="position:absolute;left:763px;top:50px" width="18" height="17" viewBox="0 0 18 17" shape-rendering="crispEdges" ><rect x="4" y="2" width="1" height="14" fill="#a0a0a0"/><rect x="13" y="0" width="1" height="15" fill="#a0a0a0"/><rect x="0" y="4" width="17" height="1" fill="#a0a0a0"/><rect x="0" y="13" width="17" height="1" fill="#a0a0a0"/><rect x="7" y="1" width="4" height="1" fill="#a0a0a0"/><rect x="6" y="0" width="1" height="3" fill="#a0a0a0"/><rect x="1" y="7" width="1" height="4" fill="#a0a0a0"/><rect x="0" y="8" width="3" height="1" fill="#a0a0a0"/></svg>
<svg style="position:absolute;left:796px;top:50px" width="20" height="17" viewBox="0 0 20 17" shape-rendering="crispEdges" ><path d="M0,1 H9 L11,3 V11 H0 Z" fill="url(#hp)"/><path d="M0.5,1.5 H8.5 L10.5,3.5 V10.5 H0.5 Z" fill="none" stroke="#a0a0a0" stroke-width="1" /><rect x="14" y="3" width="1" height="6" fill="#a0a0a0"/><path d="M12,8 H17 L14.5,11 Z" fill="#a0a0a0"/><rect x="0" y="15" width="19" height="1" fill="#a0a0a0"/><rect x="1" y="12" width="1" height="3" fill="#a0a0a0"/><path d="M4.5,12.5 h2 v2 h-2 z" fill="none" stroke="#a0a0a0" stroke-width="1" /><rect x="9" y="12" width="1" height="3" fill="#a0a0a0"/><path d="M12.5,12.5 h2 v2 h-2 z" fill="none" stroke="#a0a0a0" stroke-width="1" /><rect x="17" y="12" width="1" height="3" fill="#a0a0a0"/></svg>
<svg style="position:absolute;left:824px;top:50px" width="17" height="16" viewBox="0 0 17 16" shape-rendering="crispEdges" ><path d="M0.5,4.5 L3.5,1.5 H9.5 V8" fill="none" stroke="#a0a0a0" stroke-width="1" /><path d="M0.5,4.5 V11.5 H7" fill="none" stroke="#a0a0a0" stroke-width="1" /><rect x="3" y="3" width="1" height="1" fill="#a0a0a0"/><path d="M9,6 H13 V10 H16 L11,15 L6,10 H9 Z" fill="#a0a0a0"/></svg>
<svg style="position:absolute;left:849px;top:50px" width="18" height="16" viewBox="0 0 18 16" shape-rendering="crispEdges" ><path d="M3.5,4.5 L6.5,1.5 H12.5 V8" fill="none" stroke="#a0a0a0" stroke-width="1" /><path d="M3.5,4.5 V8" fill="none" stroke="#a0a0a0" stroke-width="1" /><rect x="6" y="3" width="1" height="1" fill="#a0a0a0"/><rect x="0" y="8" width="9" height="3" fill="#a0a0a0"/><path d="M12,6 H15 V10 H18 L13.5,15 L9,10 H12 Z" fill="#a0a0a0"/></svg>
<svg style="position:absolute;left:884px;top:50px" width="18" height="17" viewBox="0 0 18 17" shape-rendering="crispEdges" ><path d="M5,0 L10,5 L5,10 L0,5 Z" fill="#a0a0a0"/><rect x="11" y="3" width="5" height="4" fill="#a0a0a0"/><rect x="1" y="11" width="5" height="5" fill="#a0a0a0"/><rect x="11" y="11" width="5" height="5" fill="#a0a0a0"/><rect x="3" y="9" width="1" height="2" fill="#a0a0a0"/><path d="M9,5 H11" fill="none" stroke="#a0a0a0" stroke-width="1" /><path d="M6.5,6.5 L12,12" fill="none" stroke="#a0a0a0" stroke-width="1" /><rect x="13" y="4" width="1" height="1" fill="#fff"/><rect x="3" y="13" width="1" height="1" fill="#fff"/><rect x="13" y="13" width="1" height="1" fill="#fff"/></svg>
<svg style="position:absolute;left:22px;top:78px" width="10" height="16" viewBox="0 0 10 16" shape-rendering="crispEdges" ><path d="M1.5,1.5 V11.5 L4,9 L6,14 L8,13 L6,8.5 H9 Z" fill="none" stroke="#a0a0a0" stroke-width="1" shape-rendering="auto"/></svg>
<svg style="position:absolute;left:48px;top:83px" width="7" height="7" viewBox="0 0 7 7" shape-rendering="crispEdges" ><circle cx="3.5" cy="3.5" r="2.7" fill="#a0a0a0" shape-rendering="auto"/></svg>
<svg style="position:absolute;left:69px;top:78px" width="16" height="16" viewBox="0 0 16 16" shape-rendering="crispEdges" ><path d="M0.5,15 L15,0.5" fill="none" stroke="#a0a0a0" stroke-width="1" shape-rendering="auto"/></svg>
<svg style="position:absolute;left:94px;top:86px" width="16" height="1" viewBox="0 0 16 1" shape-rendering="crispEdges" ><rect x="0" y="0" width="16" height="1" fill="#a0a0a0"/></svg>
<svg style="position:absolute;left:127px;top:78px" width="1" height="16" viewBox="0 0 1 16" shape-rendering="crispEdges" ><rect x="0" y="0" width="1" height="16" fill="#a0a0a0"/></svg>
<svg style="position:absolute;left:141px;top:76px" width="22" height="20" viewBox="0 0 22 20" shape-rendering="crispEdges" ><path d="M2.0,7.5 L8.5,1.0 L6.5,13.0 L14.0,8.5 L10.0,18.0 L19.5,12.0" fill="none" stroke="#a0a0a0" stroke-width="1" shape-rendering="auto" stroke-linejoin="round"/></svg>
<svg style="position:absolute;left:167px;top:76px" width="20" height="20" viewBox="0 0 20 20" shape-rendering="crispEdges" ><path d="M3.0,2.5 L7.0,3.0 L11.0,4.5 L13.0,6.5 L12.5,8.0 L11.0,9.5 L7.0,11.0 L3.0,12.0 L2.0,11.0 L3.0,9.5 L6.0,7.5 L9.0,7.0 L12.0,8.5 L15.0,10.0 L17.0,11.5 L17.0,13.0 L14.0,15.0 L10.0,17.0 L5.0,17.5 L3.0,16.0" fill="none" stroke="#a0a0a0" stroke-width="1" shape-rendering="auto" stroke-linejoin="round"/></svg>
<svg style="position:absolute;left:194px;top:80px" width="17" height="13" viewBox="0 0 17 13" shape-rendering="crispEdges" ><path d="M0.5,0.5 H16.5 V12.5 H0.5 Z" fill="none" stroke="#a0a0a0" stroke-width="1" /></svg>
<svg style="position:absolute;left:219px;top:80px" width="17" height="13" viewBox="0 0 17 13" shape-rendering="crispEdges" ><rect x="0" y="0" width="17" height="13" fill="url(#hp)"/><path d="M0.5,0.5 H16.5 V12.5 H0.5 Z" fill="none" stroke="#a0a0a0" stroke-width="1" /></svg>
<svg style="position:absolute;left:244px;top:79px" width="17" height="15" viewBox="0 0 17 15" shape-rendering="crispEdges" ><path d="M5.5,0.5 H16 L11.5,14.5 H0.5 Z" fill="none" stroke="#a0a0a0" stroke-width="1" shape-rendering="auto"/></svg>
<svg style="position:absolute;left:269px;top:79px" width="17" height="15" viewBox="0 0 17 15" shape-rendering="crispEdges" ><path d="M5,0 H17 L12,15 H0 Z" fill="url(#hp)"/><path d="M5.5,0.5 H16 L11.5,14.5 H0.5 Z" fill="none" stroke="#a0a0a0" stroke-width="1" shape-rendering="auto"/></svg>
<svg style="position:absolute;left:293px;top:78px" width="18" height="17" viewBox="0 0 18 17" shape-rendering="crispEdges" ><circle cx="9" cy="8.5" r="7.8" fill="none" stroke="#a0a0a0" shape-rendering="auto"/></svg>
<svg style="position:absolute;left:318px;top:78px" width="18" height="17" viewBox="0 0 18 17" shape-rendering="crispEdges" ><circle cx="9" cy="8.5" r="8.2" fill="url(#hp)" stroke="#a0a0a0" stroke-width="1.2" shape-rendering="auto"/></svg>
<svg style="position:absolute;left:343px;top:79px" width="18" height="13" viewBox="0 0 18 13" shape-rendering="crispEdges" ><ellipse cx="9" cy="6.5" rx="8" ry="5.3" fill="none" stroke="#a0a0a0" shape-rendering="auto"/></svg>
<svg style="position:absolute;left:368px;top:79px" width="18" height="13" viewBox="0 0 18 13" shape-rendering="crispEdges" ><ellipse cx="9" cy="6.5" rx="8" ry="5.3" fill="url(#hp)" stroke="#a0a0a0" stroke-width="1.2" shape-rendering="auto"/></svg>
<svg style="position:absolute;left:393px;top:78px" width="18" height="17" viewBox="0 0 18 17" shape-rendering="crispEdges" ><circle cx="9" cy="8.5" r="7.8" fill="none" stroke="#a0a0a0" shape-rendering="auto"/></svg>
<svg style="position:absolute;left:418px;top:78px" width="18" height="17" viewBox="0 0 18 17" shape-rendering="crispEdges" ><circle cx="9" cy="8.5" r="7.8" fill="none" stroke="#a0a0a0" shape-rendering="auto"/><rect x="9" y="1" width="1" height="8" fill="#a0a0a0"/><rect x="9" y="8" width="8" height="1" fill="#a0a0a0"/></svg>
<svg style="position:absolute;left:443px;top:78px" width="18" height="17" viewBox="0 0 18 17" shape-rendering="crispEdges" ><path d="M9,8.5 V0.7 A7.8,7.8 0 0 1 16.8,8.5 Z" fill="url(#hp)" shape-rendering="auto"/><circle cx="9" cy="8.5" r="7.8" fill="none" stroke="#a0a0a0" shape-rendering="auto"/><rect x="9" y="1" width="1" height="8" fill="#a0a0a0"/><rect x="9" y="8" width="8" height="1" fill="#a0a0a0"/></svg>
<svg style="position:absolute;left:468px;top:78px" width="18" height="17" viewBox="0 0 18 17" shape-rendering="crispEdges" ><path d="M6,1 L8.5,5 L13,1 L12.5,7 L16.5,10 L11,11 L9,16 L7,11 L1,10.5 L5,7 Z" fill="none" stroke="#a0a0a0" stroke-width="1" shape-rendering="auto"/></svg>
<svg style="position:absolute;left:493px;top:78px" width="18" height="17" viewBox="0 0 18 17" shape-rendering="crispEdges" ><path d="M6,1 L8.5,5 L13,1 L12.5,7 L16.5,10 L11,11 L9,16 L7,11 L1,10.5 L5,7 Z" fill="url(#hp)"/><path d="M6,1 L8.5,5 L13,1 L12.5,7 L16.5,10 L11,11 L9,16 L7,11 L1,10.5 L5,7 Z" fill="none" stroke="#a0a0a0" stroke-width="1" shape-rendering="auto"/></svg>
<svg style="position:absolute;left:520px;top:80px" width="15" height="12" viewBox="0 0 15 12" shape-rendering="crispEdges" ><rect x="6" y="0" width="1" height="1" fill="#a0a0a0"/><rect x="5" y="1" width="2" height="1" fill="#a0a0a0"/><rect x="5" y="2" width="3" height="1" fill="#a0a0a0"/><rect x="4" y="3" width="1" height="1" fill="#a0a0a0"/><rect x="6" y="3" width="2" height="1" fill="#a0a0a0"/><rect x="4" y="4" width="1" height="1" fill="#a0a0a0"/><rect x="6" y="4" width="2" height="1" fill="#a0a0a0"/><rect x="3" y="5" width="1" height="1" fill="#a0a0a0"/><rect x="7" y="5" width="2" height="1" fill="#a0a0a0"/><rect x="3" y="6" width="1" height="1" fill="#a0a0a0"/><rect x="7" y="6" width="2" height="1" fill="#a0a0a0"/><rect x="2" y="7" width="6" height="1" fill="#a0a0a0"/><rect x="9" y="7" width="1" height="1" fill="#a0a0a0"/><rect x="2" y="8" width="1" height="1" fill="#a0a0a0"/><rect x="8" y="8" width="2" height="1" fill="#a0a0a0"/><rect x="1" y="9" width="1" height="1" fill="#a0a0a0"/><rect x="8" y="9" width="2" height="1" fill="#a0a0a0"/><rect x="1" y="10" width="1" height="1" fill="#a0a0a0"/><rect x="8" y="10" width="3" height="1" fill="#a0a0a0"/><rect x="0" y="11" width="3" height="1" fill="#a0a0a0"/><rect x="6" y="11" width="6" height="1" fill="#a0a0a0"/></svg>
<svg style="position:absolute;left:544px;top:79px" width="16" height="14" viewBox="0 0 16 14" shape-rendering="crispEdges" ><rect x="0" y="0" width="11" height="2" fill="#a0a0a0"/><rect x="0" y="0" width="1" height="5" fill="#a0a0a0"/><rect x="10" y="0" width="1" height="4" fill="#a0a0a0"/><rect x="4" y="0" width="2" height="10" fill="#a0a0a0"/><rect x="2" y="9" width="6" height="1" fill="#a0a0a0"/><rect x="7" y="3" width="9" height="2" fill="#a0a0a0"/><rect x="7" y="3" width="1" height="4" fill="#a0a0a0"/><rect x="15" y="3" width="1" height="4" fill="#a0a0a0"/><rect x="10" y="3" width="2" height="10" fill="#a0a0a0"/><rect x="8" y="13" width="7" height="1" fill="#a0a0a0"/></svg>
<svg style="position:absolute;left:568px;top:78px" width="18" height="16" viewBox="0 0 18 16" shape-rendering="crispEdges" ><rect x="0" y="0" width="18" height="16" fill="#a0a0a0"/><rect x="4" y="3" width="2" height="2" fill="#f0f0f0"/><rect x="2" y="8" width="1" height="1" fill="#f0f0f0"/><rect x="4" y="8" width="1" height="1" fill="#f0f0f0"/><rect x="6" y="8" width="1" height="1" fill="#f0f0f0"/><rect x="8" y="8" width="1" height="1" fill="#f0f0f0"/><rect x="2" y="10" width="1" height="1" fill="#f0f0f0"/><rect x="2" y="12" width="1" height="1" fill="#f0f0f0"/></svg>
<svg style="position:absolute;left:597px;top:81px" width="18" height="13" viewBox="0 0 18 13" shape-rendering="crispEdges" ><path d="M0.5,0.5 H16.5 V11.5 H0.5 Z" fill="none" stroke="#a0a0a0" stroke-width="1.3" /></svg>
<svg style="position:absolute;left:630px;top:78px" width="6" height="16" viewBox="0 0 6 16" shape-rendering="crispEdges" ><rect x="0" y="0" width="1" height="15" fill="#a0a0a0"/><rect x="0" y="0" width="4" height="1" fill="#a0a0a0"/><rect x="0" y="14" width="4" height="1" fill="#a0a0a0"/><rect x="1" y="3" width="2" height="1" fill="#a0a0a0"/><rect x="1" y="6" width="2" height="1" fill="#a0a0a0"/><rect x="1" y="9" width="2" height="1" fill="#a0a0a0"/><rect x="1" y="12" width="2" height="1" fill="#a0a0a0"/></svg>
<svg style="position:absolute;left:650px;top:78px" width="18" height="17" viewBox="0 0 18 17" shape-rendering="crispEdges" ><path d="M6,1 L7,0 H14 V2 L13,3 V8 L16,10 V13 L12,16 H6 L0,11 L3,9 H6 Z" fill="#a0a0a0"/><path d="M7,2 L8,1 H13 L12,3 H7 Z" fill="#f0f0f0"/><path d="M7,12 L9,13.5 L13,10" fill="none" stroke="#f0f0f0" stroke-width="1.3" shape-rendering="auto"/></svg>
<svg style="position:absolute;left:674px;top:77px" width="18" height="17" viewBox="0 0 18 17" shape-rendering="crispEdges" ><rect x="0" y="0" width="18" height="5" fill="#a0a0a0"/><rect x="0" y="0" width="1" height="17" fill="#a0a0a0"/><rect x="17" y="0" width="1" height="17" fill="#a0a0a0"/><rect x="0" y="16" width="18" height="1" fill="#a0a0a0"/><rect x="0" y="8" width="18" height="1" fill="#a0a0a0"/><rect x="0" y="12" width="18" height="1" fill="#a0a0a0"/><rect x="5" y="5" width="1" height="12" fill="#a0a0a0"/><rect x="11" y="5" width="1" height="12" fill="#a0a0a0"/></svg>
<svg style="position:absolute;left:699px;top:78px" width="21" height="16" viewBox="0 0 21 16" shape-rendering="crispEdges" ><path d="M0.5,0.5 H20.5 V15.5 H0.5 Z" fill="none" stroke="#a0a0a0" stroke-width="1.2" /><rect x="10" y="6" width="1" height="3" fill="#a0a0a0"/><rect x="9" y="7" width="3" height="1" fill="#a0a0a0"/></svg>
<svg style="position:absolute;left:725px;top:78px" width="23" height="17" viewBox="0 0 23 17" shape-rendering="crispEdges" ><rect x="0" y="0" width="22" height="1" fill="#a0a0a0"/><rect x="0" y="0" width="1" height="16" fill="#a0a0a0"/><path d="M21.5,2 V15" fill="none" stroke="#a0a0a0" stroke-width="1" stroke-dasharray="1 1"/><path d="M2,15.5 H7 M11,15.5 H22" fill="none" stroke="#a0a0a0" stroke-width="1" stroke-dasharray="1 1"/><path d="M1,8.5 H22" fill="none" stroke="#a0a0a0" stroke-width="1" stroke-dasharray="3 2"/></svg>
<svg style="position:absolute;left:754px;top:78px" width="23" height="17" viewBox="0 0 23 17" shape-rendering="crispEdges" ><path d="M1,16 L0,12 L6,2 L8,1 L10,3 L9,5 L3,14 Z" fill="#a0a0a0"/><rect x="3" y="7" width="1" height="1" fill="#f0f0f0"/><rect x="5" y="5" width="1" height="1" fill="#f0f0f0"/><rect x="4" y="9" width="1" height="1" fill="#f0f0f0"/><rect x="6" y="7" width="1" height="1" fill="#f0f0f0"/><rect x="7" y="4" width="1" height="1" fill="#f0f0f0"/><rect x="10" y="8" width="5" height="2" fill="#a0a0a0"/><path d="M9,9 L11,7 V11 Z" fill="#a0a0a0"/><rect x="15" y="0" width="1" height="16" fill="#a0a0a0"/><rect x="15" y="0" width="6" height="1" fill="#a0a0a0"/><path d="M20.5,2 V16" fill="none" stroke="#a0a0a0" stroke-width="1" stroke-dasharray="1 1"/><path d="M16,15.5 H21" fill="none" stroke="#a0a0a0" stroke-width="1" stroke-dasharray="1 1"/></svg>
<svg style="position:absolute;left:782px;top:78px" width="24" height="17" viewBox="0 0 24 17" shape-rendering="crispEdges" ><path d="M4,1 L5,0 H6 L7,1 V8 H4 Z" fill="#a0a0a0"/><path d="M2,10 L3,8 H8 L9,10 Z" fill="#a0a0a0"/><rect x="1" y="10" width="9" height="6" fill="#a0a0a0"/><rect x="3" y="12" width="1" height="3" fill="#f0f0f0"/><rect x="5" y="12" width="1" height="3" fill="#f0f0f0"/><rect x="7" y="12" width="1" height="3" fill="#f0f0f0"/><rect x="0" y="15" width="10" height="1" fill="#a0a0a0"/><rect x="10" y="0" width="1" height="16" fill="#a0a0a0"/><rect x="10" y="0" width="12" height="1" fill="#a0a0a0"/><path d="M21.5,2 V16" fill="none" stroke="#a0a0a0" stroke-width="1" stroke-dasharray="1 1"/><path d="M12,15.5 H22" fill="none" stroke="#a0a0a0" stroke-width="1" stroke-dasharray="1 1"/></svg>
<svg style="position:absolute;left:813px;top:78px" width="22" height="17" viewBox="0 0 22 17" shape-rendering="crispEdges" ><rect x="0" y="1" width="8" height="8" fill="#a0a0a0"/><rect x="8" y="4" width="5" height="3" fill="#a0a0a0"/><path d="M13.5,15.5 V0.5 H20.5" fill="none" stroke="#a0a0a0" stroke-width="1" /><path d="M20.5,1 V15.5 H14" fill="none" stroke="#a0a0a0" stroke-width="1" stroke-dasharray="1 1"/></svg>
<svg style="position:absolute;left:843px;top:78px" width="23" height="17" viewBox="0 0 23 17" shape-rendering="crispEdges" ><rect x="1" y="1" width="8" height="8" fill="#a0a0a0"/><rect x="5" y="11" width="8" height="3" fill="#a0a0a0"/><path d="M3,12.5 L6,10 V15 Z" fill="#a0a0a0"/><path d="M13.5,15.5 V0.5 H21.5" fill="none" stroke="#a0a0a0" stroke-width="1" /><path d="M21.5,1 V15.5 H14" fill="none" stroke="#a0a0a0" stroke-width="1" stroke-dasharray="1 1"/></svg>
<svg style="position:absolute;left:28px;top:112px" width="13" height="8" viewBox="0 0 13 8" shape-rendering="crispEdges" ><rect x="1" y="0" width="3" height="1" fill="#a0a0a0"/><rect x="7" y="0" width="1" height="1" fill="#a0a0a0"/><rect x="11" y="0" width="1" height="1" fill="#a0a0a0"/><rect x="0" y="1" width="1" height="1" fill="#a0a0a0"/><rect x="4" y="1" width="1" height="1" fill="#a0a0a0"/><rect x="7" y="1" width="2" height="1" fill="#a0a0a0"/><rect x="11" y="1" width="1" height="1" fill="#a0a0a0"/><rect x="0" y="2" width="1" height="1" fill="#a0a0a0"/><rect x="4" y="2" width="1" height="1" fill="#a0a0a0"/><rect x="7" y="2" width="2" height="1" fill="#a0a0a0"/><rect x="11" y="2" width="1" height="1" fill="#a0a0a0"/><rect x="0" y="3" width="1" height="1" fill="#a0a0a0"/><rect x="4" y="3" width="1" height="1" fill="#a0a0a0"/><rect x="7" y="3" width="1" height="1" fill="#a0a0a0"/><rect x="9" y="3" width="1" height="1" fill="#a0a0a0"/><rect x="11" y="3" width="1" height="1" fill="#a0a0a0"/><rect x="0" y="4" width="1" height="1" fill="#a0a0a0"/><rect x="4" y="4" width="1" height="1" fill="#a0a0a0"/><rect x="7" y="4" width="1" height="1" fill="#a0a0a0"/><rect x="9" y="4" width="1" height="1" fill="#a0a0a0"/><rect x="11" y="4" width="1" height="1" fill="#a0a0a0"/><rect x="0" y="5" width="1" height="1" fill="#a0a0a0"/><rect x="4" y="5" width="1" height="1" fill="#a0a0a0"/><rect x="7" y="5" width="1" height="1" fill="#a0a0a0"/><rect x="10" y="5" width="2" height="1" fill="#a0a0a0"/><rect x="0" y="6" width="1" height="1" fill="#a0a0a0"/><rect x="4" y="6" width="1" height="1" fill="#a0a0a0"/><rect x="7" y="6" width="1" height="1" fill="#a0a0a0"/><rect x="10" y="6" width="2" height="1" fill="#a0a0a0"/><rect x="1" y="7" width="3" height="1" fill="#a0a0a0"/><rect x="7" y="7" width="1" height="1" fill="#a0a0a0"/><rect x="11" y="7" width="1" height="1" fill="#a0a0a0"/></svg>
<svg style="position:absolute;left:53px;top:112px" width="16" height="8" viewBox="0 0 16 8" shape-rendering="crispEdges" ><rect x="1" y="0" width="3" height="1" fill="#a0a0a0"/><rect x="6" y="0" width="4" height="1" fill="#a0a0a0"/><rect x="11" y="0" width="4" height="1" fill="#a0a0a0"/><rect x="0" y="1" width="1" height="1" fill="#a0a0a0"/><rect x="4" y="1" width="1" height="1" fill="#a0a0a0"/><rect x="6" y="1" width="1" height="1" fill="#a0a0a0"/><rect x="11" y="1" width="1" height="1" fill="#a0a0a0"/><rect x="0" y="2" width="1" height="1" fill="#a0a0a0"/><rect x="4" y="2" width="1" height="1" fill="#a0a0a0"/><rect x="6" y="2" width="1" height="1" fill="#a0a0a0"/><rect x="11" y="2" width="1" height="1" fill="#a0a0a0"/><rect x="0" y="3" width="1" height="1" fill="#a0a0a0"/><rect x="4" y="3" width="1" height="1" fill="#a0a0a0"/><rect x="6" y="3" width="3" height="1" fill="#a0a0a0"/><rect x="11" y="3" width="3" height="1" fill="#a0a0a0"/><rect x="0" y="4" width="1" height="1" fill="#a0a0a0"/><rect x="4" y="4" width="1" height="1" fill="#a0a0a0"/><rect x="6" y="4" width="1" height="1" fill="#a0a0a0"/><rect x="11" y="4" width="1" height="1" fill="#a0a0a0"/><rect x="0" y="5" width="1" height="1" fill="#a0a0a0"/><rect x="4" y="5" width="1" height="1" fill="#a0a0a0"/><rect x="6" y="5" width="1" height="1" fill="#a0a0a0"/><rect x="11" y="5" width="1" height="1" fill="#a0a0a0"/><rect x="0" y="6" width="1" height="1" fill="#a0a0a0"/><rect x="4" y="6" width="1" height="1" fill="#a0a0a0"/><rect x="6" y="6" width="1" height="1" fill="#a0a0a0"/><rect x="11" y="6" width="1" height="1" fill="#a0a0a0"/><rect x="1" y="7" width="3" height="1" fill="#a0a0a0"/><rect x="6" y="7" width="1" height="1" fill="#a0a0a0"/><rect x="11" y="7" width="1" height="1" fill="#a0a0a0"/></svg>
<svg style="position:absolute;left:78px;top:107px" width="16" height="20" viewBox="0 0 16 20" shape-rendering="crispEdges" ><path d="M6,1 L7,0 H14 L15,1 V18 L14,19 H7 L6,18 V6 L5,5 H3 L1,3 L2,2 H6 Z" fill="#a0a0a0"/></svg>
<svg style="position:absolute;left:103px;top:107px" width="19" height="18" viewBox="0 0 19 18" shape-rendering="crispEdges" ><path d="M10,1 L18,10 V17 L17,17 H3 L2,16 V10 Z" fill="#f0f0f0"/><path d="M10,1 L18,10 V11 H2 V10 Z" fill="#a0a0a0"/><path d="M1,11 H18 V15 L17,17 H2 L1,15 Z" fill="#a0a0a0"/><path d="M2.5,10 Q10,14 17.5,10" fill="none" stroke="#f0f0f0" stroke-width="1.4" shape-rendering="auto"/><rect x="1" y="10" width="1" height="1" fill="#a0a0a0"/><rect x="18" y="10" width="1" height="1" fill="#a0a0a0"/></svg>
<svg style="position:absolute;left:128px;top:106px" width="21" height="21" viewBox="0 0 21 21" shape-rendering="crispEdges" ><circle cx="10.5" cy="10.5" r="5.8" fill="#a0a0a0" shape-rendering="auto"/><circle cx="10.5" cy="10.5" r="7.3" fill="none" stroke="#a0a0a0" stroke-width="1.2" shape-rendering="auto"/><rect x="10" y="1" width="1" height="1" fill="#a0a0a0"/><rect x="10" y="19" width="1" height="1" fill="#a0a0a0"/><rect x="1" y="10" width="1" height="1" fill="#a0a0a0"/><rect x="19" y="10" width="1" height="1" fill="#a0a0a0"/><rect x="4" y="4" width="1" height="1" fill="#a0a0a0"/><rect x="16" y="4" width="1" height="1" fill="#a0a0a0"/><rect x="4" y="16" width="1" height="1" fill="#a0a0a0"/><rect x="16" y="16" width="1" height="1" fill="#a0a0a0"/></svg>
<svg style="position:absolute;left:160px;top:112px" width="9" height="9" viewBox="0 0 9 9" shape-rendering="crispEdges" ><rect x="0" y="0" width="3" height="1" fill="#a0a0a0"/><rect x="5" y="0" width="3" height="1" fill="#a0a0a0"/><rect x="1" y="1" width="1" height="1" fill="#a0a0a0"/><rect x="6" y="1" width="1" height="1" fill="#a0a0a0"/><rect x="1" y="2" width="1" height="1" fill="#a0a0a0"/><rect x="6" y="2" width="1" height="1" fill="#a0a0a0"/><rect x="2" y="3" width="1" height="1" fill="#a0a0a0"/><rect x="5" y="3" width="1" height="1" fill="#a0a0a0"/><rect x="2" y="4" width="1" height="1" fill="#a0a0a0"/><rect x="5" y="4" width="1" height="1" fill="#a0a0a0"/><rect x="2" y="5" width="1" height="1" fill="#a0a0a0"/><rect x="5" y="5" width="1" height="1" fill="#a0a0a0"/><rect x="3" y="6" width="2" height="1" fill="#a0a0a0"/><rect x="3" y="7" width="2" height="1" fill="#a0a0a0"/></svg>
<svg style="position:absolute;left:183px;top:111px" width="14" height="10" viewBox="0 0 14 10" shape-rendering="crispEdges" ><path d="M0.5,1.5 L1.5,0.5 V8.5" fill="none" stroke="#a0a0a0" stroke-width="1" /><path d="M4.5,0.5 H7.5 V4.5 H4.5 V8.5 H7.5" fill="none" stroke="#a0a0a0" stroke-width="1" /><path d="M9.5,0.5 H12.5 V8.5 H9.5 M10,4.5 H12.5" fill="none" stroke="#a0a0a0" stroke-width="1" /></svg>
<svg style="position:absolute;left:211px;top:111px" width="10" height="10" viewBox="0 0 10 10" shape-rendering="crispEdges" ><rect x="0" y="4" width="9" height="2" fill="#a0a0a0"/><rect x="3" y="1" width="3" height="8" fill="#a0a0a0"/></svg>
<svg style="position:absolute;left:237px;top:115px" width="10" height="3" viewBox="0 0 10 3" shape-rendering="crispEdges" ><rect x="0" y="0" width="9" height="2" fill="#a0a0a0"/></svg>
<svg style="position:absolute;left:259px;top:106px" width="20" height="18" viewBox="0 0 20 18" shape-rendering="crispEdges" ><path d="M1,3 H5 L6,4 H14 V6 H18 L14,16 H1 Z" fill="#a0a0a0"/><rect x="2" y="5" width="1" height="1" fill="#f0f0f0"/><rect x="4" y="5" width="1" height="1" fill="#f0f0f0"/><rect x="6" y="5" width="1" height="1" fill="#f0f0f0"/><rect x="8" y="5" width="1" height="1" fill="#f0f0f0"/><rect x="10" y="5" width="1" height="1" fill="#f0f0f0"/><rect x="2" y="7" width="1" height="1" fill="#f0f0f0"/><rect x="2" y="9" width="1" height="1" fill="#f0f0f0"/><rect x="2" y="12" width="1" height="1" fill="#f0f0f0"/><path d="M12,2 Q15,-1 17,2" fill="none" stroke="#a0a0a0" stroke-width="1.2" shape-rendering="auto"/><path d="M15,3 H19 V0 Z" fill="#a0a0a0"/></svg>
<svg style="position:absolute;left:285px;top:106px" width="19" height="18" viewBox="0 0 19 18" shape-rendering="crispEdges" ><path d="M1,4 H4 L5,3 H7 L8,4 H14 V17 H1 Z" fill="#a0a0a0"/><path d="M14.5,6 V2.5 H17" fill="none" stroke="#a0a0a0" stroke-width="1" /><path d="M13,0 L16,0 L14,3 Z" fill="#a0a0a0"/><rect x="15" y="3" width="1" height="3" fill="#a0a0a0"/></svg>
<svg style="position:absolute;left:318px;top:111px" width="4" height="11" viewBox="0 0 4 11" shape-rendering="crispEdges" ><rect x="1" y="0" width="2" height="7" fill="#a0a0a0"/><rect x="1" y="8" width="2" height="2" fill="#a0a0a0"/></svg>
<svg style="position:absolute;left:337px;top:109px" width="18" height="13" viewBox="0 0 18 13" shape-rendering="crispEdges" ><path d="M0.5,3.5 H5" fill="none" stroke="#a0a0a0" stroke-width="1" /><path d="M4,1 L7,3.5 L4,6 Z" fill="#a0a0a0"/><path d="M8.5,0.5 H13.5 L16.5,3.5 V11.5 H8.5 Z" fill="none" stroke="#a0a0a0" stroke-width="1" /><rect x="10" y="5" width="5" height="1" fill="#a0a0a0"/><rect x="10" y="7" width="5" height="1" fill="#a0a0a0"/><rect x="10" y="9" width="5" height="1" fill="#a0a0a0"/></svg>
<svg style="position:absolute;left:363px;top:107px" width="19" height="18" viewBox="0 0 19 18" shape-rendering="crispEdges" ><rect x="1" y="1" width="16" height="1" fill="#a0a0a0"/><rect x="1" y="1" width="1" height="12" fill="#a0a0a0"/><rect x="17" y="0" width="1" height="13" fill="#a0a0a0"/><rect x="1" y="12" width="2" height="1" fill="#a0a0a0"/><rect x="15" y="12" width="2" height="1" fill="#a0a0a0"/><rect x="4" y="3" width="1" height="1" fill="#a0a0a0"/><rect x="7" y="3" width="3" height="1" fill="#a0a0a0"/><rect x="11" y="3" width="3" height="1" fill="#a0a0a0"/><rect x="4" y="4" width="1" height="1" fill="#a0a0a0"/><rect x="9" y="4" width="1" height="1" fill="#a0a0a0"/><rect x="13" y="4" width="1" height="1" fill="#a0a0a0"/><rect x="4" y="5" width="1" height="1" fill="#a0a0a0"/><rect x="9" y="5" width="1" height="1" fill="#a0a0a0"/><rect x="13" y="5" width="1" height="1" fill="#a0a0a0"/><rect x="4" y="6" width="1" height="1" fill="#a0a0a0"/><rect x="7" y="6" width="3" height="1" fill="#a0a0a0"/><rect x="12" y="6" width="2" height="1" fill="#a0a0a0"/><rect x="4" y="7" width="1" height="1" fill="#a0a0a0"/><rect x="7" y="7" width="1" height="1" fill="#a0a0a0"/><rect x="13" y="7" width="1" height="1" fill="#a0a0a0"/><rect x="4" y="8" width="1" height="1" fill="#a0a0a0"/><rect x="7" y="8" width="1" height="1" fill="#a0a0a0"/><rect x="13" y="8" width="1" height="1" fill="#a0a0a0"/><rect x="4" y="9" width="1" height="1" fill="#a0a0a0"/><rect x="7" y="9" width="3" height="1" fill="#a0a0a0"/><rect x="11" y="9" width="3" height="1" fill="#a0a0a0"/><rect x="5" y="13" width="8" height="1" fill="#a0a0a0"/><rect x="12" y="11" width="1" height="2" fill="#a0a0a0"/><rect x="6" y="12" width="1" height="3" fill="#a0a0a0"/><rect x="14" y="9" width="1" height="8" fill="#a0a0a0"/><rect x="3" y="16" width="12" height="1" fill="#a0a0a0"/></svg>
<svg style="position:absolute;left:389px;top:107px" width="19" height="18" viewBox="0 0 19 18" shape-rendering="crispEdges" ><rect x="1" y="1" width="16" height="1" fill="#a0a0a0"/><rect x="1" y="1" width="1" height="12" fill="#a0a0a0"/><rect x="17" y="0" width="1" height="13" fill="#a0a0a0"/><rect x="1" y="12" width="2" height="1" fill="#a0a0a0"/><rect x="15" y="12" width="2" height="1" fill="#a0a0a0"/><rect x="4" y="3" width="2" height="1" fill="#a0a0a0"/><rect x="8" y="3" width="3" height="1" fill="#a0a0a0"/><rect x="14" y="3" width="3" height="1" fill="#a0a0a0"/><rect x="3" y="4" width="1" height="1" fill="#a0a0a0"/><rect x="6" y="4" width="1" height="1" fill="#a0a0a0"/><rect x="8" y="4" width="1" height="1" fill="#a0a0a0"/><rect x="11" y="4" width="1" height="1" fill="#a0a0a0"/><rect x="13" y="4" width="1" height="1" fill="#a0a0a0"/><rect x="3" y="5" width="1" height="1" fill="#a0a0a0"/><rect x="6" y="5" width="1" height="1" fill="#a0a0a0"/><rect x="8" y="5" width="1" height="1" fill="#a0a0a0"/><rect x="11" y="5" width="1" height="1" fill="#a0a0a0"/><rect x="13" y="5" width="1" height="1" fill="#a0a0a0"/><rect x="3" y="6" width="4" height="1" fill="#a0a0a0"/><rect x="8" y="6" width="3" height="1" fill="#a0a0a0"/><rect x="13" y="6" width="1" height="1" fill="#a0a0a0"/><rect x="3" y="7" width="1" height="1" fill="#a0a0a0"/><rect x="6" y="7" width="1" height="1" fill="#a0a0a0"/><rect x="8" y="7" width="1" height="1" fill="#a0a0a0"/><rect x="11" y="7" width="1" height="1" fill="#a0a0a0"/><rect x="13" y="7" width="1" height="1" fill="#a0a0a0"/><rect x="3" y="8" width="1" height="1" fill="#a0a0a0"/><rect x="6" y="8" width="1" height="1" fill="#a0a0a0"/><rect x="8" y="8" width="1" height="1" fill="#a0a0a0"/><rect x="11" y="8" width="1" height="1" fill="#a0a0a0"/><rect x="13" y="8" width="1" height="1" fill="#a0a0a0"/><rect x="3" y="9" width="1" height="1" fill="#a0a0a0"/><rect x="6" y="9" width="1" height="1" fill="#a0a0a0"/><rect x="8" y="9" width="3" height="1" fill="#a0a0a0"/><rect x="14" y="9" width="3" height="1" fill="#a0a0a0"/><rect x="5" y="13" width="8" height="1" fill="#a0a0a0"/><rect x="12" y="11" width="1" height="2" fill="#a0a0a0"/><rect x="6" y="12" width="1" height="3" fill="#a0a0a0"/><rect x="14" y="9" width="1" height="8" fill="#a0a0a0"/><rect x="3" y="16" width="12" height="1" fill="#a0a0a0"/></svg>
<svg style="position:absolute;left:418px;top:108px" width="12" height="16" viewBox="0 0 12 16" shape-rendering="crispEdges" ><circle cx="5.5" cy="5.5" r="5.3" fill="#a0a0a0" shape-rendering="auto"/><path d="M7,3 L5,5 L7,7" fill="none" stroke="#f0f0f0" stroke-width="1.2" /><rect x="3" y="10" width="5" height="2" fill="#a0a0a0"/><rect x="3" y="12" width="5" height="1" fill="#f0f0f0"/><rect x="3" y="13" width="5" height="1" fill="#a0a0a0"/><rect x="4" y="14" width="3" height="1" fill="#a0a0a0"/></svg>
<svg style="position:absolute;left:441px;top:108px" width="19" height="15" viewBox="0 0 19 15" shape-rendering="crispEdges" ><rect x="1" y="2" width="17" height="1" fill="#a0a0a0"/><rect x="1" y="2" width="1" height="12" fill="#a0a0a0"/><rect x="17" y="1" width="1" height="13" fill="#a0a0a0"/><rect x="1" y="13" width="17" height="1" fill="#a0a0a0"/><rect x="4" y="4" width="1" height="1" fill="#a0a0a0"/><rect x="7" y="4" width="3" height="1" fill="#a0a0a0"/><rect x="11" y="4" width="3" height="1" fill="#a0a0a0"/><rect x="4" y="5" width="1" height="1" fill="#a0a0a0"/><rect x="9" y="5" width="1" height="1" fill="#a0a0a0"/><rect x="13" y="5" width="1" height="1" fill="#a0a0a0"/><rect x="4" y="6" width="1" height="1" fill="#a0a0a0"/><rect x="9" y="6" width="1" height="1" fill="#a0a0a0"/><rect x="13" y="6" width="1" height="1" fill="#a0a0a0"/><rect x="4" y="7" width="1" height="1" fill="#a0a0a0"/><rect x="7" y="7" width="3" height="1" fill="#a0a0a0"/><rect x="12" y="7" width="2" height="1" fill="#a0a0a0"/><rect x="4" y="8" width="1" height="1" fill="#a0a0a0"/><rect x="7" y="8" width="1" height="1" fill="#a0a0a0"/><rect x="13" y="8" width="1" height="1" fill="#a0a0a0"/><rect x="4" y="9" width="1" height="1" fill="#a0a0a0"/><rect x="7" y="9" width="1" height="1" fill="#a0a0a0"/><rect x="13" y="9" width="1" height="1" fill="#a0a0a0"/><rect x="4" y="10" width="1" height="1" fill="#a0a0a0"/><rect x="7" y="10" width="3" height="1" fill="#a0a0a0"/><rect x="11" y="10" width="3" height="1" fill="#a0a0a0"/></svg>
<svg style="position:absolute;left:467px;top:108px" width="19" height="15" viewBox="0 0 19 15" shape-rendering="crispEdges" ><rect x="1" y="2" width="17" height="1" fill="#a0a0a0"/><rect x="1" y="2" width="1" height="12" fill="#a0a0a0"/><rect x="17" y="1" width="1" height="13" fill="#a0a0a0"/><rect x="1" y="13" width="17" height="1" fill="#a0a0a0"/><rect x="3" y="4" width="2" height="1" fill="#a0a0a0"/><rect x="7" y="4" width="3" height="1" fill="#a0a0a0"/><rect x="13" y="4" width="3" height="1" fill="#a0a0a0"/><rect x="2" y="5" width="1" height="1" fill="#a0a0a0"/><rect x="5" y="5" width="1" height="1" fill="#a0a0a0"/><rect x="7" y="5" width="1" height="1" fill="#a0a0a0"/><rect x="10" y="5" width="1" height="1" fill="#a0a0a0"/><rect x="12" y="5" width="1" height="1" fill="#a0a0a0"/><rect x="2" y="6" width="1" height="1" fill="#a0a0a0"/><rect x="5" y="6" width="1" height="1" fill="#a0a0a0"/><rect x="7" y="6" width="1" height="1" fill="#a0a0a0"/><rect x="10" y="6" width="1" height="1" fill="#a0a0a0"/><rect x="12" y="6" width="1" height="1" fill="#a0a0a0"/><rect x="2" y="7" width="4" height="1" fill="#a0a0a0"/><rect x="7" y="7" width="3" height="1" fill="#a0a0a0"/><rect x="12" y="7" width="1" height="1" fill="#a0a0a0"/><rect x="2" y="8" width="1" height="1" fill="#a0a0a0"/><rect x="5" y="8" width="1" height="1" fill="#a0a0a0"/><rect x="7" y="8" width="1" height="1" fill="#a0a0a0"/><rect x="10" y="8" width="1" height="1" fill="#a0a0a0"/><rect x="12" y="8" width="1" height="1" fill="#a0a0a0"/><rect x="2" y="9" width="1" height="1" fill="#a0a0a0"/><rect x="5" y="9" width="1" height="1" fill="#a0a0a0"/><rect x="7" y="9" width="1" height="1" fill="#a0a0a0"/><rect x="10" y="9" width="1" height="1" fill="#a0a0a0"/><rect x="12" y="9" width="1" height="1" fill="#a0a0a0"/><rect x="2" y="10" width="1" height="1" fill="#a0a0a0"/><rect x="5" y="10" width="1" height="1" fill="#a0a0a0"/><rect x="7" y="10" width="3" height="1" fill="#a0a0a0"/><rect x="13" y="10" width="3" height="1" fill="#a0a0a0"/></svg>
<svg style="position:absolute;left:497px;top:107px" width="7" height="17" viewBox="0 0 7 17" shape-rendering="crispEdges" ><rect x="0" y="0" width="6" height="3" fill="#a0a0a0"/><rect x="0" y="3" width="6" height="13" fill="url(#hp)"/><rect x="0" y="0" width="1" height="16" fill="#a0a0a0"/><rect x="5" y="0" width="1" height="16" fill="#a0a0a0"/></svg>
<svg style="position:absolute;left:519px;top:107px" width="17" height="17" viewBox="0 0 17 17" shape-rendering="crispEdges" ><circle cx="8.5" cy="8.5" r="7.7" fill="url(#hp)" stroke="#a0a0a0" stroke-width="1.2" shape-rendering="auto"/><path d="M4.5,11.5 L12,5" fill="none" stroke="#f0f0f0" stroke-width="1.5" shape-rendering="auto"/></svg>
<svg style="position:absolute;left:545px;top:107px" width="18" height="17" viewBox="0 0 18 17" shape-rendering="crispEdges" ><rect x="1" y="1" width="9" height="3" fill="#a0a0a0"/><path d="M1.5,1.5 V12.5 H5" fill="none" stroke="#a0a0a0" stroke-width="1" /><rect x="3" y="5" width="2" height="1" fill="#a0a0a0"/><rect x="3" y="7" width="2" height="1" fill="#a0a0a0"/><rect x="3" y="9" width="2" height="1" fill="#a0a0a0"/><rect x="5" y="3" width="12" height="3" fill="#a0a0a0"/><path d="M5.5,5.5 H16.5 V15.5 H5.5 Z" fill="none" stroke="#a0a0a0" stroke-width="1" /><rect x="8" y="8" width="6" height="1" fill="#a0a0a0"/><rect x="13" y="9" width="1" height="1" fill="#a0a0a0"/><rect x="12" y="10" width="1" height="1" fill="#a0a0a0"/><rect x="11" y="11" width="1" height="1" fill="#a0a0a0"/><rect x="10" y="12" width="1" height="1" fill="#a0a0a0"/><rect x="8" y="13" width="6" height="1" fill="#a0a0a0"/></svg>
<svg style="position:absolute;left:571px;top:108px" width="19" height="16" viewBox="0 0 19 16" shape-rendering="crispEdges" ><path d="M0.5,1.5 H17.5 V14.5" fill="none" stroke="#a0a0a0" stroke-width="1" /><path d="M1.5,1.5 V14.5 H17.5" fill="none" stroke="#a0a0a0" stroke-width="1" /><rect x="17" y="0" width="1" height="1" fill="#a0a0a0"/><path d="M5,4 L10,8" fill="none" stroke="#a0a0a0" stroke-width="1" /><rect x="4" y="3" width="1" height="1" fill="#a0a0a0"/><rect x="7" y="3" width="1" height="1" fill="#a0a0a0"/><rect x="10" y="3" width="1" height="1" fill="#a0a0a0"/><rect x="13" y="3" width="1" height="1" fill="#a0a0a0"/></svg>
<svg style="position:absolute;left:598px;top:108px" width="17" height="16" viewBox="0 0 17 16" shape-rendering="crispEdges" ><path d="M2,14 A7.5,7.5 0 1 1 15,14" fill="none" stroke="#a0a0a0" stroke-dasharray="2 1" shape-rendering="auto"/><path d="M5,11 L11,5" fill="none" stroke="#a0a0a0" stroke-width="1.4" shape-rendering="auto"/><rect x="4" y="6" width="1" height="1" fill="#a0a0a0"/><rect x="12" y="9" width="1" height="1" fill="#a0a0a0"/><rect x="8" y="3" width="1" height="1" fill="#a0a0a0"/></svg>
<svg style="position:absolute;left:624px;top:109px" width="17" height="14" viewBox="0 0 17 14" shape-rendering="crispEdges" ><rect x="0" y="1" width="16" height="1" fill="#a0a0a0"/><rect x="0" y="1" width="1" height="13" fill="#a0a0a0"/><rect x="0" y="13" width="17" height="1" fill="#a0a0a0"/><rect x="16" y="0" width="1" height="14" fill="#a0a0a0"/><rect x="1" y="2" width="15" height="11" fill="#f6f6f6"/><path d="M6,2 H10 L13,5 V9 L10,12 H6 L3,9 V5 Z" fill="#a0a0a0"/></svg>
<svg style="position:absolute;left:650px;top:109px" width="17" height="13" viewBox="0 0 17 13" shape-rendering="crispEdges" ><rect x="0" y="1" width="16" height="1" fill="#a0a0a0"/><rect x="16" y="0" width="1" height="13" fill="#a0a0a0"/><rect x="0" y="12" width="17" height="1" fill="#a0a0a0"/><path d="M0,1 H6 V3 H7 V4 H8 V5 H9 V8 H8 V9 H7 V10 H6 V12 H0 Z" fill="#a0a0a0"/><rect x="11" y="5" width="1" height="3" fill="#a0a0a0"/><rect x="13" y="5" width="1" height="3" fill="#a0a0a0"/></svg>
<svg style="position:absolute;left:675px;top:108px" width="18" height="17" viewBox="0 0 18 17" shape-rendering="crispEdges" ><path d="M0.5,0.5 H17.5 V16.5 H0.5 Z" fill="none" stroke="#a0a0a0" stroke-width="1" /><rect x="13" y="0" width="1" height="17" fill="#a0a0a0"/><rect x="13" y="5" width="5" height="1" fill="#a0a0a0"/><rect x="13" y="12" width="5" height="1" fill="#a0a0a0"/><rect x="15" y="2" width="1" height="1" fill="#a0a0a0"/><rect x="15" y="14" width="1" height="1" fill="#a0a0a0"/><rect x="3" y="2" width="8" height="1" fill="#a0a0a0"/><rect x="3" y="4" width="8" height="1" fill="#a0a0a0"/><rect x="1" y="7" width="12" height="3" fill="#a0a0a0"/><rect x="3" y="8" width="8" height="1" fill="#f0f0f0"/><rect x="3" y="12" width="8" height="1" fill="#a0a0a0"/><rect x="3" y="14" width="8" height="1" fill="#a0a0a0"/></svg>
<svg style="position:absolute;left:701px;top:107px" width="19" height="18" viewBox="0 0 19 18" shape-rendering="crispEdges" ><path d="M0.5,0.5 H17.5 V5.5 H0.5 Z" fill="none" stroke="#a0a0a0" stroke-width="1" /><rect x="13" y="1" width="1" height="4" fill="#a0a0a0"/><rect x="15" y="2" width="1" height="2" fill="#a0a0a0"/><rect x="3" y="2" width="8" height="1" fill="#a0a0a0"/><path d="M3.5,5.5 V17.5 H17.5 V5.5" fill="none" stroke="#a0a0a0" stroke-width="1" /><rect x="6" y="7" width="9" height="1" fill="#a0a0a0"/><rect x="4" y="9" width="13" height="3" fill="#a0a0a0"/><rect x="6" y="10" width="9" height="1" fill="#f0f0f0"/><rect x="6" y="13" width="9" height="1" fill="#a0a0a0"/><rect x="6" y="15" width="9" height="1" fill="#a0a0a0"/></svg>
<svg style="position:absolute;left:727px;top:108px" width="19" height="16" viewBox="0 0 19 16" shape-rendering="crispEdges" ><rect x="7" y="0" width="11" height="2" fill="#a0a0a0"/><rect x="8" y="1" width="1" height="1" fill="#f0f0f0"/><rect x="10" y="1" width="1" height="1" fill="#f0f0f0"/><rect x="12" y="1" width="1" height="1" fill="#f0f0f0"/><rect x="14" y="1" width="1" height="1" fill="#f0f0f0"/><rect x="16" y="1" width="1" height="1" fill="#f0f0f0"/><rect x="4" y="2" width="14" height="2" fill="#a0a0a0"/><rect x="5" y="3" width="1" height="1" fill="#f0f0f0"/><rect x="7" y="3" width="1" height="1" fill="#f0f0f0"/><rect x="9" y="3" width="1" height="1" fill="#f0f0f0"/><rect x="11" y="3" width="1" height="1" fill="#f0f0f0"/><rect x="13" y="3" width="1" height="1" fill="#f0f0f0"/><rect x="15" y="3" width="1" height="1" fill="#f0f0f0"/><path d="M0,5 L1,4 H17 V10 H16 V12 H15 V13 H14 V15 H0 Z" fill="#a0a0a0"/></svg>
<svg style="position:absolute;left:755px;top:108px" width="15" height="18" viewBox="0 0 15 18" shape-rendering="crispEdges" ><rect x="0" y="0" width="15" height="17" fill="#a0a0a0"/><rect x="1" y="1" width="1" height="1" fill="#f0f0f0"/><rect x="13" y="1" width="1" height="1" fill="#f0f0f0"/><rect x="1" y="3" width="1" height="1" fill="#f0f0f0"/><rect x="13" y="3" width="1" height="1" fill="#f0f0f0"/><rect x="1" y="5" width="1" height="1" fill="#f0f0f0"/><rect x="13" y="5" width="1" height="1" fill="#f0f0f0"/><rect x="1" y="7" width="1" height="1" fill="#f0f0f0"/><rect x="13" y="7" width="1" height="1" fill="#f0f0f0"/><rect x="1" y="9" width="1" height="1" fill="#f0f0f0"/><rect x="13" y="9" width="1" height="1" fill="#f0f0f0"/><rect x="1" y="11" width="1" height="1" fill="#f0f0f0"/><rect x="13" y="11" width="1" height="1" fill="#f0f0f0"/><rect x="1" y="13" width="1" height="1" fill="#f0f0f0"/><rect x="13" y="13" width="1" height="1" fill="#f0f0f0"/><rect x="1" y="15" width="1" height="1" fill="#f0f0f0"/><rect x="13" y="15" width="1" height="1" fill="#f0f0f0"/><rect x="3" y="1" width="9" height="15" fill="url(#hp)"/></svg>
<svg style="position:absolute;left:780px;top:108px" width="22" height="18" viewBox="0 0 22 18" shape-rendering="crispEdges" ><rect x="1" y="1" width="20" height="16" fill="#a0a0a0"/><rect x="4" y="1" width="2" height="1" fill="#f0f0f0"/><rect x="4" y="16" width="2" height="1" fill="#f0f0f0"/><rect x="9" y="1" width="2" height="1" fill="#f0f0f0"/><rect x="9" y="16" width="2" height="1" fill="#f0f0f0"/><rect x="14" y="1" width="2" height="1" fill="#f0f0f0"/><rect x="14" y="16" width="2" height="1" fill="#f0f0f0"/><rect x="1" y="4" width="1" height="2" fill="#f0f0f0"/><rect x="20" y="4" width="1" height="2" fill="#f0f0f0"/><rect x="1" y="9" width="1" height="2" fill="#f0f0f0"/><rect x="20" y="9" width="1" height="2" fill="#f0f0f0"/><rect x="1" y="13" width="1" height="2" fill="#f0f0f0"/><rect x="20" y="13" width="1" height="2" fill="#f0f0f0"/><rect x="0" y="0" width="2" height="2" fill="#f0f0f0"/><rect x="19" y="0" width="3" height="2" fill="#f0f0f0"/><rect x="0" y="15" width="2" height="3" fill="#f0f0f0"/><rect x="19" y="15" width="3" height="3" fill="#f0f0f0"/><rect x="1" y="1" width="1" height="1" fill="#a0a0a0"/><rect x="20" y="1" width="1" height="1" fill="#a0a0a0"/><rect x="1" y="16" width="1" height="1" fill="#a0a0a0"/><rect x="20" y="16" width="1" height="1" fill="#a0a0a0"/></svg>
<div style="position:absolute;left:888px;top:105px;width:111px;height:18px;background:#fff"></div>
<div style="position:absolute;left:983px;top:106px;width:16px;height:16px;background:#f0f0f0"></div>
<svg style="position:absolute;left:988px;top:112px" width="8" height="4" viewBox="0 0 8 4" shape-rendering="crispEdges" ><path d="M0,0 H7 V1 L4,4 H3 L0,1 Z" fill="#000"/></svg>
<svg style="position:absolute;left:1009px;top:106px" width="15" height="16" viewBox="0 0 15 16" shape-rendering="crispEdges" ><rect x="1" y="1" width="9" height="11" fill="#a0a0a0"/><rect x="4" y="4" width="9" height="9" fill="#a0a0a0"/><rect x="1" y="12" width="3" height="1" fill="#fff"/><rect x="4" y="13" width="10" height="2" fill="#f0f0f0"/><path d="M3.5,14.5 H12.5" fill="none" stroke="#a0a0a0" stroke-width="1" /></svg>
<svg style="position:absolute;left:1032px;top:106px" width="24" height="17" viewBox="0 0 24 17" shape-rendering="crispEdges" ><rect x="0" y="1" width="10" height="10" fill="#a0a0a0"/><path d="M4,4 H12 V8 L9,9 L12,12 V15 H4 Z" fill="#a0a0a0"/><path d="M8,14 L13,8" fill="none" stroke="#f0f0f0" stroke-width="1" /><path d="M14.5,15.5 V0.5 H21.5" fill="none" stroke="#a0a0a0" stroke-width="1" /><path d="M21.5,1 V15.5 H15" fill="none" stroke="#a0a0a0" stroke-width="1" stroke-dasharray="1 1"/></svg>
<svg style="position:absolute;left:1067px;top:106px" width="22" height="17" viewBox="0 0 22 17" shape-rendering="crispEdges" ><path d="M3,2 H6 L8,4 V6 H13 V9 H8 V11 L6,13 H3 L1,11 V4 Z" fill="#a0a0a0"/><path d="M13.5,15.5 V0.5 H20.5" fill="none" stroke="#a0a0a0" stroke-width="1" /><path d="M20.5,1 V15.5 H14" fill="none" stroke="#a0a0a0" stroke-width="1" stroke-dasharray="1 1"/></svg>
<svg style="position:absolute;left:1097px;top:106px" width="14" height="16" viewBox="0 0 14 16" shape-rendering="crispEdges" ><rect x="0" y="0" width="14" height="16" fill="#a0a0a0"/><path d="M9,3 H5 L3,5 V11 L5,13 H9 V10 H6 V6 H9 Z" fill="#f0f0f0"/></svg>
<div style="position:absolute;left:83px;top:135px;width:1px;height:22px;background:#a0a0a0"></div>
<div style="position:absolute;left:84px;top:135px;width:1px;height:22px;background:#fff"></div>
<div style="position:absolute;left:137px;top:135px;width:1px;height:22px;background:#a0a0a0"></div>
<div style="position:absolute;left:138px;top:135px;width:1px;height:22px;background:#fff"></div>
<div style="position:absolute;left:215px;top:135px;width:1px;height:22px;background:#a0a0a0"></div>
<div style="position:absolute;left:216px;top:135px;width:1px;height:22px;background:#fff"></div>
<div style="position:absolute;left:376px;top:135px;width:1px;height:22px;background:#a0a0a0"></div>
<div style="position:absolute;left:377px;top:135px;width:1px;height:22px;background:#fff"></div>
<div style="position:absolute;left:430px;top:135px;width:1px;height:22px;background:#a0a0a0"></div>
<div style="position:absolute;left:431px;top:135px;width:1px;height:22px;background:#fff"></div>
<div style="position:absolute;left:673px;top:135px;width:1px;height:22px;background:#a0a0a0"></div>
<div style="position:absolute;left:674px;top:135px;width:1px;height:22px;background:#fff"></div>
<div style="position:absolute;left:759px;top:135px;width:1px;height:22px;background:#a0a0a0"></div>
<div style="position:absolute;left:760px;top:135px;width:1px;height:22px;background:#fff"></div>
<div style="position:absolute;left:871px;top:135px;width:1px;height:22px;background:#a0a0a0"></div>
<div style="position:absolute;left:872px;top:135px;width:1px;height:22px;background:#fff"></div>
<div style="position:absolute;left:983px;top:135px;width:1px;height:22px;background:#a0a0a0"></div>
<div style="position:absolute;left:984px;top:135px;width:1px;height:22px;background:#fff"></div>
<svg style="position:absolute;left:10px;top:136px" width="22" height="19" viewBox="0 0 22 19" shape-rendering="crispEdges" ><rect x="2" y="3" width="2" height="1" fill="#a0a0a0"/><rect x="4" y="2" width="1" height="3" fill="#a0a0a0"/><rect x="2" y="8" width="2" height="1" fill="#a0a0a0"/><rect x="4" y="7" width="1" height="3" fill="#a0a0a0"/><rect x="7" y="2" width="1" height="3" fill="#a0a0a0"/><rect x="7" y="7" width="1" height="3" fill="#a0a0a0"/><rect x="7" y="3" width="6" height="1" fill="#a0a0a0"/><rect x="10" y="3" width="1" height="6" fill="#a0a0a0"/><rect x="7" y="8" width="4" height="1" fill="#a0a0a0"/><rect x="14" y="1" width="1" height="1" fill="#a0a0a0"/><rect x="13" y="2" width="1" height="4" fill="#a0a0a0"/><rect x="14" y="6" width="1" height="1" fill="#a0a0a0"/><rect x="17" y="1" width="1" height="1" fill="#a0a0a0"/><rect x="18" y="2" width="1" height="4" fill="#a0a0a0"/><rect x="17" y="6" width="1" height="1" fill="#a0a0a0"/><rect x="7" y="12" width="1" height="6" fill="#a0a0a0"/><rect x="7" y="17" width="3" height="1" fill="#a0a0a0"/><rect x="11" y="13" width="1" height="5" fill="#a0a0a0"/><rect x="12" y="12" width="2" height="1" fill="#a0a0a0"/><rect x="14" y="13" width="1" height="5" fill="#a0a0a0"/><rect x="12" y="15" width="2" height="1" fill="#a0a0a0"/><rect x="16" y="12" width="1" height="6" fill="#a0a0a0"/><rect x="16" y="12" width="3" height="1" fill="#a0a0a0"/><rect x="16" y="17" width="3" height="1" fill="#a0a0a0"/><rect x="19" y="13" width="1" height="4" fill="#a0a0a0"/></svg>
<svg style="position:absolute;left:36px;top:138px" width="18" height="17" viewBox="0 0 18 17" shape-rendering="crispEdges" ><rect x="3" y="1" width="14" height="2" fill="#a0a0a0"/><path d="M3.5,1.5 V12.5 H16.5 V1.5" fill="none" stroke="#a0a0a0" stroke-width="1" /><rect x="5" y="4" width="3" height="1" fill="#a0a0a0"/><rect x="9" y="4" width="2" height="1" fill="#a0a0a0"/><rect x="5" y="6" width="5" height="1" fill="#a0a0a0"/><path d="M3,13 L9,7 M8,13 L14,7" fill="none" stroke="#a0a0a0" stroke-width="1" shape-rendering="auto"/><rect x="13" y="8" width="2" height="1" fill="#a0a0a0"/><rect x="14" y="8" width="1" height="3" fill="#a0a0a0"/><rect x="7" y="9" width="1" height="2" fill="#a0a0a0"/><circle cx="3" cy="14" r="1.8" fill="none" stroke="#a0a0a0" shape-rendering="auto"/><circle cx="9" cy="14" r="1.8" fill="none" stroke="#a0a0a0" shape-rendering="auto"/></svg>
<svg style="position:absolute;left:61px;top:138px" width="17" height="16" viewBox="0 0 17 16" shape-rendering="crispEdges" ><rect x="0" y="0" width="12" height="10" fill="#a0a0a0"/><rect x="1" y="1" width="1" height="1" fill="#f0f0f0"/><rect x="4" y="1" width="1" height="1" fill="#f0f0f0"/><rect x="7" y="1" width="1" height="1" fill="#f0f0f0"/><rect x="10" y="1" width="1" height="1" fill="#f0f0f0"/><rect x="1" y="3" width="1" height="1" fill="#f0f0f0"/><rect x="1" y="5" width="1" height="1" fill="#f0f0f0"/><rect x="1" y="7" width="1" height="1" fill="#f0f0f0"/><rect x="3" y="3" width="9" height="6" fill="#f0f0f0"/><rect x="4" y="4" width="1" height="1" fill="#a0a0a0"/><rect x="6" y="4" width="2" height="1" fill="#a0a0a0"/><rect x="4" y="6" width="1" height="1" fill="#a0a0a0"/><rect x="6" y="6" width="2" height="1" fill="#a0a0a0"/><path d="M7.5,4.5 H12.5 L15.5,7.5 V14.5 H7.5 Z" fill="#f0f0f0" stroke="#a0a0a0" stroke-width="1" /><rect x="9" y="6" width="2" height="1" fill="#a0a0a0"/><rect x="9" y="8" width="2" height="1" fill="#a0a0a0"/><rect x="9" y="10" width="2" height="1" fill="#a0a0a0"/><rect x="9" y="12" width="2" height="1" fill="#a0a0a0"/><rect x="12" y="5" width="1" height="2" fill="#a0a0a0"/></svg>
<svg style="position:absolute;left:97px;top:141px" width="7" height="11" viewBox="0 0 7 11" shape-rendering="crispEdges" ><path d="M0,0 L5.5,5.2 L0,10.5 Z" fill="#a0a0a0"/></svg>
<svg style="position:absolute;left:119px;top:142px" width="9" height="9" viewBox="0 0 9 9" shape-rendering="crispEdges" ><rect x="0" y="0" width="8" height="8" fill="#a0a0a0"/></svg>
<svg style="position:absolute;left:143px;top:137px" width="21" height="19" viewBox="0 0 21 19" shape-rendering="crispEdges" ><rect x="1" y="3" width="17" height="8" fill="#a0a0a0"/><path d="M1,4 L5,0 H10 V1 H6 L3,4 Z" fill="#a0a0a0"/><rect x="6" y="3" width="4" height="1" fill="#f0f0f0"/><rect x="11" y="3" width="6" height="1" fill="#f0f0f0"/><rect x="4" y="5" width="1" height="1" fill="#f0f0f0"/><rect x="9" y="5" width="1" height="1" fill="#f0f0f0"/><rect x="11" y="5" width="1" height="1" fill="#f0f0f0"/><rect x="14" y="5" width="1" height="1" fill="#f0f0f0"/><rect x="16" y="5" width="1" height="1" fill="#f0f0f0"/><rect x="5" y="7" width="1" height="1" fill="#f0f0f0"/><rect x="8" y="7" width="1" height="1" fill="#f0f0f0"/><rect x="10" y="7" width="1" height="1" fill="#f0f0f0"/><rect x="12" y="7" width="1" height="1" fill="#f0f0f0"/><rect x="15" y="7" width="1" height="1" fill="#f0f0f0"/><rect x="2" y="9" width="1" height="1" fill="#f0f0f0"/><rect x="5" y="9" width="1" height="1" fill="#f0f0f0"/><rect x="9" y="9" width="1" height="1" fill="#f0f0f0"/><rect x="11" y="9" width="1" height="1" fill="#f0f0f0"/><rect x="14" y="9" width="1" height="1" fill="#f0f0f0"/><rect x="16" y="9" width="1" height="1" fill="#f0f0f0"/><rect x="7" y="12" width="8" height="1" fill="#a0a0a0"/><rect x="16" y="12" width="3" height="1" fill="#a0a0a0"/><rect x="6" y="13" width="1" height="1" fill="#a0a0a0"/><rect x="12" y="13" width="1" height="1" fill="#a0a0a0"/><rect x="15" y="13" width="1" height="1" fill="#a0a0a0"/><rect x="6" y="14" width="1" height="1" fill="#a0a0a0"/><rect x="12" y="14" width="1" height="1" fill="#a0a0a0"/><rect x="15" y="14" width="1" height="1" fill="#a0a0a0"/><rect x="7" y="15" width="2" height="1" fill="#a0a0a0"/><rect x="12" y="15" width="1" height="1" fill="#a0a0a0"/><rect x="16" y="15" width="2" height="1" fill="#a0a0a0"/><rect x="9" y="16" width="1" height="1" fill="#a0a0a0"/><rect x="12" y="16" width="1" height="1" fill="#a0a0a0"/><rect x="18" y="16" width="1" height="1" fill="#a0a0a0"/><rect x="9" y="17" width="1" height="1" fill="#a0a0a0"/><rect x="12" y="17" width="1" height="1" fill="#a0a0a0"/><rect x="18" y="17" width="1" height="1" fill="#a0a0a0"/><rect x="6" y="18" width="3" height="1" fill="#a0a0a0"/><rect x="12" y="18" width="1" height="1" fill="#a0a0a0"/><rect x="15" y="18" width="3" height="1" fill="#a0a0a0"/></svg>
<svg style="position:absolute;left:168px;top:138px" width="19" height="16" viewBox="0 0 19 16" shape-rendering="crispEdges" ><path d="M0.5,0.5 H8.5 L11.5,3.5 V5" fill="none" stroke="#a0a0a0" stroke-width="1" /><path d="M0.5,0.5 V14.5 H6" fill="none" stroke="#a0a0a0" stroke-width="1" /><rect x="9" y="1" width="1" height="2" fill="#a0a0a0"/><rect x="3" y="2" width="1" height="1" fill="#a0a0a0"/><rect x="2" y="3" width="2" height="1" fill="#a0a0a0"/><rect x="3" y="4" width="1" height="1" fill="#a0a0a0"/><rect x="3" y="5" width="1" height="1" fill="#a0a0a0"/><rect x="3" y="6" width="1" height="1" fill="#a0a0a0"/><path d="M6.5,5.5 H16.5 V13.5 H6.5 Z" fill="#f0f0f0" stroke="#a0a0a0" stroke-width="1" /><rect x="17" y="6" width="1" height="9" fill="#a0a0a0"/><rect x="7" y="14" width="11" height="1" fill="#a0a0a0"/><rect x="8" y="7" width="6" height="2" fill="#a0a0a0"/><rect x="15" y="7" width="1" height="2" fill="#a0a0a0"/><rect x="8" y="10" width="2" height="1" fill="#a0a0a0"/><rect x="11" y="10" width="2" height="1" fill="#a0a0a0"/><rect x="14" y="10" width="2" height="1" fill="#a0a0a0"/></svg>
<svg style="position:absolute;left:193px;top:137px" width="18" height="17" viewBox="0 0 18 17" shape-rendering="crispEdges" ><path d="M0.5,5.5 H15.5 V14.5 H0.5 Z" fill="#f0f0f0" stroke="#a0a0a0" stroke-width="1" /><rect x="16" y="6" width="1" height="10" fill="#a0a0a0"/><rect x="1" y="15" width="16" height="1" fill="#a0a0a0"/><rect x="2" y="7" width="8" height="4" fill="#a0a0a0"/><path d="M9,11 L14,3 L15,4 L11,11 Z" fill="#a0a0a0"/><path d="M13,2 L15,0 H17 V2 L16,4 Z" fill="#a0a0a0"/><rect x="15" y="7" width="1" height="1" fill="#a0a0a0"/><rect x="13" y="9" width="2" height="1" fill="#a0a0a0"/><rect x="2" y="12" width="2" height="1" fill="#a0a0a0"/><rect x="5" y="12" width="2" height="1" fill="#a0a0a0"/><rect x="8" y="12" width="2" height="1" fill="#a0a0a0"/><rect x="11" y="12" width="2" height="1" fill="#a0a0a0"/></svg>
<svg style="position:absolute;left:224px;top:138px" width="13" height="15" viewBox="0 0 13 15" shape-rendering="crispEdges" ><path d="M2,6 V3 L4,1 H8 L10,3 V6 H8 V3.5 L7.5,3 H4.5 L4,3.5 V6 Z" fill="#a0a0a0"/><path d="M2,6 H11 L12,7 V13 L11,14 H2 L1,13 V7 Z" fill="url(#hp)"/><path d="M2.5,6.5 H10.5 L11.5,7.5 V12.5 L10.5,13.5 H2.5 L1.5,12.5 V7.5 Z" fill="none" stroke="#a0a0a0" stroke-width="1" shape-rendering="auto"/></svg>
<svg style="position:absolute;left:248px;top:138px" width="13" height="15" viewBox="0 0 13 15" shape-rendering="crispEdges" ><path d="M2,6 V3 L4,1 H8 L10,3 V4 H8 V3.5 L7.5,3 H4.5 L4,3.5 V6 Z" fill="#a0a0a0"/><path d="M2,6 H11 L12,7 V13 L11,14 H2 L1,13 V7 Z" fill="url(#hp)"/><path d="M2.5,6.5 H10.5 L11.5,7.5 V12.5 L10.5,13.5 H2.5 L1.5,12.5 V7.5 Z" fill="none" stroke="#a0a0a0" stroke-width="1" shape-rendering="auto"/></svg>
<svg style="position:absolute;left:271px;top:137px" width="17" height="17" viewBox="0 0 17 17" shape-rendering="crispEdges" ><path d="M2,8 V5 L4,3 H7 L9,5 V6 H7 V5.5 L6.5,5 H4.5 L4,5.5 V8 Z" fill="#a0a0a0"/><path d="M2,8 H11 L12,9 V15 L11,16 H2 L1,15 V9 Z" fill="url(#hp)"/><path d="M2.5,8.5 H10.5 L11.5,9.5 V14.5 L10.5,15.5 H2.5 L1.5,14.5 V9.5 Z" fill="none" stroke="#a0a0a0" stroke-width="1" shape-rendering="auto"/><path d="M9,1 H16 L12.5,5 Z" fill="#a0a0a0"/></svg>
<svg style="position:absolute;left:304px;top:141px" width="20" height="12" viewBox="0 0 20 12" shape-rendering="crispEdges" ><path d="M0.5,1.5 H11.5 V11" fill="none" stroke="#a0a0a0" stroke-width="1" /><path d="M7,7 L11.5,11.5 L16,7" fill="none" stroke="#a0a0a0" stroke-width="1" shape-rendering="auto"/></svg>
<svg style="position:absolute;left:328px;top:139px" width="19" height="11" viewBox="0 0 19 11" shape-rendering="crispEdges" ><path d="M0.5,9.5 H11.5 V1" fill="none" stroke="#a0a0a0" stroke-width="1" /><path d="M7,5 L11.5,0.5 L16,5" fill="none" stroke="#a0a0a0" stroke-width="1" shape-rendering="auto"/></svg>
<svg style="position:absolute;left:354px;top:142px" width="16" height="8" viewBox="0 0 16 8" shape-rendering="crispEdges" ><path d="M0.5,3.5 H14" fill="none" stroke="#a0a0a0" stroke-width="1" /><path d="M10,0 L14,3.5 L10,7" fill="none" stroke="#a0a0a0" stroke-width="1" shape-rendering="auto"/></svg>
<svg style="position:absolute;left:383px;top:138px" width="18" height="14" viewBox="0 0 18 14" shape-rendering="crispEdges" ><rect x="1" y="0" width="1" height="1" fill="#a0a0a0"/><rect x="4" y="0" width="1" height="1" fill="#a0a0a0"/><rect x="1" y="1" width="1" height="1" fill="#a0a0a0"/><rect x="4" y="1" width="1" height="1" fill="#a0a0a0"/><rect x="0" y="2" width="2" height="1" fill="#a0a0a0"/><rect x="4" y="2" width="4" height="1" fill="#a0a0a0"/><rect x="1" y="3" width="1" height="1" fill="#a0a0a0"/><rect x="4" y="3" width="1" height="1" fill="#a0a0a0"/><rect x="7" y="3" width="1" height="1" fill="#a0a0a0"/><rect x="1" y="4" width="1" height="1" fill="#a0a0a0"/><rect x="4" y="4" width="1" height="1" fill="#a0a0a0"/><rect x="7" y="4" width="1" height="1" fill="#a0a0a0"/><rect x="7" y="5" width="1" height="1" fill="#a0a0a0"/><rect x="7" y="6" width="1" height="1" fill="#a0a0a0"/><rect x="7" y="7" width="1" height="1" fill="#a0a0a0"/><rect x="11" y="7" width="1" height="1" fill="#a0a0a0"/><rect x="15" y="7" width="1" height="1" fill="#a0a0a0"/><rect x="1" y="8" width="1" height="1" fill="#a0a0a0"/><rect x="4" y="8" width="1" height="1" fill="#a0a0a0"/><rect x="7" y="8" width="1" height="1" fill="#a0a0a0"/><rect x="10" y="8" width="1" height="1" fill="#a0a0a0"/><rect x="16" y="8" width="1" height="1" fill="#a0a0a0"/><rect x="1" y="9" width="1" height="1" fill="#a0a0a0"/><rect x="4" y="9" width="1" height="1" fill="#a0a0a0"/><rect x="7" y="9" width="1" height="1" fill="#a0a0a0"/><rect x="10" y="9" width="1" height="1" fill="#a0a0a0"/><rect x="16" y="9" width="1" height="1" fill="#a0a0a0"/><rect x="0" y="10" width="2" height="1" fill="#a0a0a0"/><rect x="4" y="10" width="7" height="1" fill="#a0a0a0"/><rect x="16" y="10" width="1" height="1" fill="#a0a0a0"/><rect x="1" y="11" width="1" height="1" fill="#a0a0a0"/><rect x="4" y="11" width="1" height="1" fill="#a0a0a0"/><rect x="10" y="11" width="1" height="1" fill="#a0a0a0"/><rect x="16" y="11" width="1" height="1" fill="#a0a0a0"/><rect x="1" y="12" width="1" height="1" fill="#a0a0a0"/><rect x="4" y="12" width="1" height="1" fill="#a0a0a0"/><rect x="10" y="12" width="1" height="1" fill="#a0a0a0"/><rect x="16" y="12" width="1" height="1" fill="#a0a0a0"/><rect x="11" y="13" width="1" height="1" fill="#a0a0a0"/><rect x="15" y="13" width="1" height="1" fill="#a0a0a0"/></svg>
<svg style="position:absolute;left:407px;top:137px" width="19" height="15" viewBox="0 0 19 15" shape-rendering="crispEdges" ><rect x="1" y="1" width="1" height="1" fill="#a0a0a0"/><rect x="4" y="1" width="1" height="1" fill="#a0a0a0"/><rect x="1" y="2" width="1" height="1" fill="#a0a0a0"/><rect x="4" y="2" width="1" height="1" fill="#a0a0a0"/><rect x="0" y="3" width="2" height="1" fill="#a0a0a0"/><rect x="4" y="3" width="4" height="1" fill="#a0a0a0"/><rect x="1" y="4" width="1" height="1" fill="#a0a0a0"/><rect x="4" y="4" width="1" height="1" fill="#a0a0a0"/><rect x="7" y="4" width="1" height="1" fill="#a0a0a0"/><rect x="1" y="5" width="1" height="1" fill="#a0a0a0"/><rect x="4" y="5" width="1" height="1" fill="#a0a0a0"/><rect x="7" y="5" width="1" height="1" fill="#a0a0a0"/><rect x="7" y="6" width="1" height="1" fill="#a0a0a0"/><rect x="7" y="7" width="1" height="1" fill="#a0a0a0"/><rect x="7" y="8" width="1" height="1" fill="#a0a0a0"/><rect x="11" y="8" width="1" height="1" fill="#a0a0a0"/><rect x="15" y="8" width="1" height="1" fill="#a0a0a0"/><rect x="1" y="9" width="1" height="1" fill="#a0a0a0"/><rect x="4" y="9" width="1" height="1" fill="#a0a0a0"/><rect x="7" y="9" width="1" height="1" fill="#a0a0a0"/><rect x="10" y="9" width="1" height="1" fill="#a0a0a0"/><rect x="16" y="9" width="1" height="1" fill="#a0a0a0"/><rect x="1" y="10" width="1" height="1" fill="#a0a0a0"/><rect x="4" y="10" width="1" height="1" fill="#a0a0a0"/><rect x="7" y="10" width="1" height="1" fill="#a0a0a0"/><rect x="10" y="10" width="1" height="1" fill="#a0a0a0"/><rect x="16" y="10" width="1" height="1" fill="#a0a0a0"/><rect x="0" y="11" width="2" height="1" fill="#a0a0a0"/><rect x="4" y="11" width="7" height="1" fill="#a0a0a0"/><rect x="16" y="11" width="1" height="1" fill="#a0a0a0"/><rect x="1" y="12" width="1" height="1" fill="#a0a0a0"/><rect x="4" y="12" width="1" height="1" fill="#a0a0a0"/><rect x="10" y="12" width="1" height="1" fill="#a0a0a0"/><rect x="16" y="12" width="1" height="1" fill="#a0a0a0"/><rect x="1" y="13" width="1" height="1" fill="#a0a0a0"/><rect x="4" y="13" width="1" height="1" fill="#a0a0a0"/><rect x="10" y="13" width="1" height="1" fill="#a0a0a0"/><rect x="16" y="13" width="1" height="1" fill="#a0a0a0"/><rect x="11" y="14" width="1" height="1" fill="#a0a0a0"/><rect x="15" y="14" width="1" height="1" fill="#a0a0a0"/><rect x="14" y="0" width="1" height="1" fill="#a0a0a0"/><rect x="11" y="1" width="1" height="1" fill="#a0a0a0"/><rect x="14" y="1" width="2" height="1" fill="#a0a0a0"/><rect x="12" y="2" width="1" height="1" fill="#a0a0a0"/><rect x="14" y="2" width="2" height="1" fill="#a0a0a0"/><rect x="10" y="3" width="1" height="1" fill="#a0a0a0"/><rect x="13" y="3" width="2" height="1" fill="#a0a0a0"/><rect x="8" y="4" width="1" height="1" fill="#a0a0a0"/><rect x="12" y="4" width="3" height="1" fill="#a0a0a0"/><rect x="6" y="5" width="1" height="1" fill="#a0a0a0"/><rect x="12" y="5" width="1" height="1" fill="#a0a0a0"/><rect x="14" y="5" width="2" height="1" fill="#a0a0a0"/><rect x="14" y="6" width="1" height="1" fill="#a0a0a0"/></svg>
<div style="position:absolute;left:436px;top:137px;width:62px;height:16px;border:1px solid #fff;background:#f0f0f0"></div>
<div style="position:absolute;left:483px;top:138px;width:1px;height:16px;background:#e6e6e6"></div>
<svg style="position:absolute;left:487px;top:144px" width="9" height="5" viewBox="0 0 9 5" shape-rendering="crispEdges" ><path d="M0,0 H9 L4.5,5 Z" fill="#a0a0a0"/></svg>
<svg style="position:absolute;left:519px;top:137px" width="16" height="18" viewBox="0 0 16 18" shape-rendering="crispEdges" ><path d="M0.5,0.5 V16" fill="none" stroke="#a0a0a0" stroke-width="1" /><rect x="2" y="1" width="5" height="4" fill="#a0a0a0"/><rect x="3" y="2" width="3" height="2" fill="#f0f0f0"/><path d="M2.5,7.5 H14.5 V11.5 H2.5 Z" fill="none" stroke="#a0a0a0" stroke-width="1" /><rect x="1" y="14" width="12" height="2" fill="#a0a0a0"/><circle cx="2.5" cy="15" r="2" fill="#a0a0a0" shape-rendering="auto"/></svg>
<svg style="position:absolute;left:546px;top:137px" width="15" height="18" viewBox="0 0 15 18" shape-rendering="crispEdges" ><rect x="7" y="0" width="1" height="17" fill="#a0a0a0"/><path d="M3.5,2.5 H11.5 V5.5 H3.5 Z" fill="none" stroke="#a0a0a0" stroke-width="1" /><path d="M0.5,8.5 H14.5 V12.5 H0.5 Z" fill="none" stroke="#a0a0a0" stroke-width="1" /></svg>
<svg style="position:absolute;left:571px;top:137px" width="16" height="18" viewBox="0 0 16 18" shape-rendering="crispEdges" ><path d="M14.5,0.5 V16" fill="none" stroke="#a0a0a0" stroke-width="1" /><path d="M7.5,1.5 H12.5 V4.5 H7.5 Z" fill="none" stroke="#a0a0a0" stroke-width="1" /><path d="M0.5,7.5 H12.5 V11.5 H0.5 Z" fill="none" stroke="#a0a0a0" stroke-width="1" /><rect x="3" y="14" width="10" height="2" fill="#a0a0a0"/><circle cx="12.5" cy="15" r="2" fill="#a0a0a0" shape-rendering="auto"/></svg>
<svg style="position:absolute;left:596px;top:137px" width="17" height="17" viewBox="0 0 17 17" shape-rendering="crispEdges" ><rect x="0" y="0" width="16" height="1" fill="#a0a0a0"/><path d="M0.5,2.5 H3.5 V11.5 H0.5 Z" fill="none" stroke="#a0a0a0" stroke-width="1" /><path d="M5.5,2.5 H9.5 V14.5 H5.5 Z" fill="none" stroke="#a0a0a0" stroke-width="1" /><rect x="12" y="3" width="2" height="10" fill="#a0a0a0"/><path d="M11,5 L13,1 L15,5 Z" fill="#a0a0a0"/></svg>
<svg style="position:absolute;left:621px;top:138px" width="18" height="16" viewBox="0 0 18 16" shape-rendering="crispEdges" ><rect x="0" y="7" width="17" height="1" fill="#a0a0a0"/><path d="M2.5,3.5 H6.5 V11.5 H2.5 Z" fill="#f0f0f0" stroke="#a0a0a0" stroke-width="1" /><path d="M9.5,0.5 H13.5 V14.5 H9.5 Z" fill="#f0f0f0" stroke="#a0a0a0" stroke-width="1" /></svg>
<svg style="position:absolute;left:648px;top:137px" width="18" height="17" viewBox="0 0 18 17" shape-rendering="crispEdges" ><rect x="0" y="15" width="16" height="1" fill="#a0a0a0"/><path d="M1.5,4.5 H4.5 V13.5 H1.5 Z" fill="none" stroke="#a0a0a0" stroke-width="1" /><path d="M6.5,1.5 H10.5 V13.5 H6.5 Z" fill="none" stroke="#a0a0a0" stroke-width="1" /><rect x="12" y="2" width="2" height="10" fill="#a0a0a0"/><path d="M11,10 L13,14 L15,10 Z" fill="#a0a0a0"/></svg>
<svg style="position:absolute;left:682px;top:137px" width="18" height="17" viewBox="0 0 18 17" shape-rendering="crispEdges" ><path d="M1.5,0.5 H16.5 V4.5 H1.5 Z" fill="none" stroke="#a0a0a0" stroke-width="1" /><path d="M1.5,6 V14 M16.5,6 V14" fill="none" stroke="#a0a0a0" stroke-width="1" stroke-dasharray="2 1"/><path d="M5.5,10.5 H10.5 V14.5 H5.5 Z" fill="none" stroke="#a0a0a0" stroke-width="1" /><path d="M1,12.5 H4 M12,12.5 H16" fill="none" stroke="#a0a0a0" stroke-width="1" /><rect x="1" y="11" width="1" height="3" fill="#a0a0a0"/><rect x="15" y="11" width="1" height="3" fill="#a0a0a0"/></svg>
<svg style="position:absolute;left:708px;top:137px" width="18" height="17" viewBox="0 0 18 17" shape-rendering="crispEdges" ><path d="M10.5,0.5 H15.5 V15.5 H10.5 Z" fill="none" stroke="#a0a0a0" stroke-width="1" /><path d="M1.5,5.5 H5.5 V10.5 H1.5 Z" fill="none" stroke="#a0a0a0" stroke-width="1" /><path d="M3,0.5 H8 M3,15.5 H8" fill="none" stroke="#a0a0a0" stroke-width="1" stroke-dasharray="2 1"/><path d="M3.5,1 V4 M3.5,12 V15" fill="none" stroke="#a0a0a0" stroke-width="1" /><rect x="2" y="1" width="3" height="1" fill="#a0a0a0"/><rect x="2" y="14" width="3" height="1" fill="#a0a0a0"/></svg>
<svg style="position:absolute;left:734px;top:137px" width="17" height="17" viewBox="0 0 17 17" shape-rendering="crispEdges" ><path d="M0.5,0.5 H4 M12,0.5 H15.5 V4 M15.5,12 V15.5 H12 M4,15.5 H0.5 V12 M0.5,4 V0.5" fill="none" stroke="#a0a0a0" stroke-width="1" /><path d="M5.5,5.5 H10.5 V10.5 H5.5 Z" fill="none" stroke="#a0a0a0" stroke-width="1" /><path d="M8,1 V4 M8,12 V15 M1,8 H4 M12,8 H15" fill="none" stroke="#a0a0a0" stroke-width="1" /><rect x="7" y="1" width="3" height="1" fill="#a0a0a0"/><rect x="7" y="14" width="3" height="1" fill="#a0a0a0"/><rect x="1" y="7" width="1" height="3" fill="#a0a0a0"/><rect x="14" y="7" width="1" height="3" fill="#a0a0a0"/></svg>
<svg style="position:absolute;left:769px;top:138px" width="15" height="17" viewBox="0 0 15 17" shape-rendering="crispEdges" ><path d="M0.5,0.5 H12.5 V10.5 H0.5 Z" fill="none" stroke="#a0a0a0" stroke-width="1" /><path d="M6.5,4 V16.5" fill="none" stroke="#a0a0a0" stroke-width="1" /><path d="M4,6 L6.5,3.5 L9,6" fill="none" stroke="#a0a0a0" stroke-width="1" shape-rendering="auto"/><path d="M0,14.5 H13" fill="none" stroke="#a0a0a0" stroke-width="1" stroke-dasharray="1 1"/></svg>
<svg style="position:absolute;left:795px;top:137px" width="15" height="17" viewBox="0 0 15 17" shape-rendering="crispEdges" ><path d="M0,0.5 H13" fill="none" stroke="#a0a0a0" stroke-width="1" stroke-dasharray="1 1"/><path d="M0.5,4.5 H12.5 V14.5 H0.5 Z" fill="none" stroke="#a0a0a0" stroke-width="1" /><path d="M6.5,0 V11" fill="none" stroke="#a0a0a0" stroke-width="1" /><path d="M4,8.5 L6.5,11 L9,8.5" fill="none" stroke="#a0a0a0" stroke-width="1" shape-rendering="auto"/></svg>
<svg style="position:absolute;left:821px;top:137px" width="17" height="17" viewBox="0 0 17 17" shape-rendering="crispEdges" ><path d="M0.5,1.5 H10.5 V14.5 H0.5 Z" fill="none" stroke="#a0a0a0" stroke-width="1" /><path d="M13.5,0 V16" fill="none" stroke="#a0a0a0" stroke-width="1" stroke-dasharray="1 1"/><path d="M3,8.5 H16" fill="none" stroke="#a0a0a0" stroke-width="1" /><path d="M6,5.5 L3,8.5 L6,11.5" fill="none" stroke="#a0a0a0" stroke-width="1" shape-rendering="auto"/></svg>
<svg style="position:absolute;left:846px;top:137px" width="17" height="17" viewBox="0 0 17 17" shape-rendering="crispEdges" ><path d="M5.5,1.5 H15.5 V14.5 H5.5 Z" fill="none" stroke="#a0a0a0" stroke-width="1" /><path d="M1.5,0 V16" fill="none" stroke="#a0a0a0" stroke-width="1" stroke-dasharray="1 1"/><path d="M0,8.5 H13" fill="none" stroke="#a0a0a0" stroke-width="1" /><path d="M10,5.5 L13,8.5 L10,11.5" fill="none" stroke="#a0a0a0" stroke-width="1" shape-rendering="auto"/></svg>
<svg style="position:absolute;left:881px;top:138px" width="17" height="17" viewBox="0 0 17 17" shape-rendering="crispEdges" ><rect x="0" y="0" width="7" height="8" fill="#a0a0a0"/><rect x="3" y="3" width="10" height="10" fill="#a0a0a0"/><rect x="4" y="4" width="8" height="8" fill="url(#hp)"/><rect x="9" y="8" width="7" height="8" fill="#a0a0a0"/></svg>
<svg style="position:absolute;left:907px;top:138px" width="17" height="17" viewBox="0 0 17 17" shape-rendering="crispEdges" ><rect x="0" y="0" width="7" height="8" fill="#a0a0a0"/><rect x="3" y="3" width="10" height="10" fill="#a0a0a0"/><path d="M4,11 L11,4 H4 Z" fill="url(#hp)"/><path d="M6,12 H12 V6 Z" fill="url(#hp)"/><rect x="9" y="8" width="7" height="8" fill="#a0a0a0"/></svg>
<svg style="position:absolute;left:934px;top:139px" width="17" height="17" viewBox="0 0 17 17" shape-rendering="crispEdges" ><rect x="3" y="4" width="11" height="10" fill="#a0a0a0"/><rect x="4" y="5" width="9" height="8" fill="url(#hp)"/><rect x="0" y="0" width="11" height="10" fill="#a0a0a0"/></svg>
<svg style="position:absolute;left:960px;top:139px" width="17" height="17" viewBox="0 0 17 17" shape-rendering="crispEdges" ><rect x="0" y="0" width="11" height="10" fill="#a0a0a0"/><rect x="3" y="4" width="11" height="10" fill="#a0a0a0"/><rect x="4" y="5" width="9" height="8" fill="url(#hp)"/></svg>
<svg style="position:absolute;left:992px;top:138px" width="18" height="15" viewBox="0 0 18 15" shape-rendering="crispEdges" ><path d="M2,2 H11 V5 H15 V13 H7 V11 H2 Z" fill="#a0a0a0"/><rect x="1" y="1" width="2" height="2" fill="#a0a0a0"/><rect x="14" y="1" width="2" height="2" fill="#a0a0a0"/><rect x="1" y="12" width="2" height="2" fill="#a0a0a0"/><rect x="14" y="12" width="2" height="2" fill="#a0a0a0"/></svg>
<svg style="position:absolute;left:1018px;top:137px" width="18" height="17" viewBox="0 0 18 17" shape-rendering="crispEdges" ><path d="M2,2 H12 V6 H16 V15 H6 V12 H2 Z" fill="#a0a0a0"/><rect x="1" y="1" width="2" height="2" fill="#a0a0a0"/><rect x="11" y="1" width="2" height="2" fill="#a0a0a0"/><rect x="15" y="5" width="2" height="2" fill="#a0a0a0"/><rect x="1" y="11" width="2" height="2" fill="#a0a0a0"/><rect x="5" y="14" width="2" height="2" fill="#a0a0a0"/><rect x="15" y="14" width="2" height="2" fill="#a0a0a0"/></svg>
<svg style="position:absolute;left:1043px;top:138px" width="19" height="14" viewBox="0 0 19 14" shape-rendering="crispEdges" ><path d="M1,13 L11,8 V13 Z" fill="#a0a0a0"/><path d="M12,1 L18,13 H12 Z" fill="#a0a0a0"/></svg>
<div style="position:absolute;left:13px;top:165px;width:96px;height:18px;background:#fff"></div>
<div style="position:absolute;left:92px;top:166px;width:16px;height:16px;background:#f0f0f0"></div>
<svg style="position:absolute;left:97px;top:172px" width="8" height="4" viewBox="0 0 8 4" shape-rendering="crispEdges" ><path d="M0,0 H7 V1 L4,4 H3 L0,1 Z" fill="#000"/></svg>
<div style="position:absolute;left:113px;top:165px;width:140px;height:18px;background:#fff"></div>
<svg style="position:absolute;left:258px;top:165px" width="24" height="18" viewBox="0 0 24 18" shape-rendering="crispEdges" ><rect x="6" y="4" width="1" height="1" fill="#a0a0a0"/><rect x="5" y="5" width="2" height="1" fill="#a0a0a0"/><rect x="5" y="6" width="3" height="1" fill="#a0a0a0"/><rect x="4" y="7" width="1" height="1" fill="#a0a0a0"/><rect x="6" y="7" width="2" height="1" fill="#a0a0a0"/><rect x="4" y="8" width="1" height="1" fill="#a0a0a0"/><rect x="6" y="8" width="2" height="1" fill="#a0a0a0"/><rect x="3" y="9" width="1" height="1" fill="#a0a0a0"/><rect x="7" y="9" width="2" height="1" fill="#a0a0a0"/><rect x="3" y="10" width="1" height="1" fill="#a0a0a0"/><rect x="7" y="10" width="2" height="1" fill="#a0a0a0"/><rect x="2" y="11" width="7" height="1" fill="#a0a0a0"/><rect x="2" y="12" width="1" height="1" fill="#a0a0a0"/><rect x="8" y="12" width="2" height="1" fill="#a0a0a0"/><rect x="1" y="13" width="1" height="1" fill="#a0a0a0"/><rect x="8" y="13" width="2" height="1" fill="#a0a0a0"/><rect x="0" y="14" width="3" height="1" fill="#a0a0a0"/><rect x="6" y="14" width="5" height="1" fill="#a0a0a0"/><path d="M11,10 L14,7.5 V12.5 Z" fill="#a0a0a0"/><rect x="13" y="9" width="3" height="2" fill="#a0a0a0"/><rect x="15" y="1" width="1" height="16" fill="#a0a0a0"/><rect x="15" y="1" width="8" height="1" fill="#a0a0a0"/><path d="M22.5,3 V17" fill="none" stroke="#a0a0a0" stroke-width="1" stroke-dasharray="1 1"/><path d="M16,16.5 H23" fill="none" stroke="#a0a0a0" stroke-width="1" stroke-dasharray="1 1"/></svg>
<svg style="position:absolute;left:293px;top:167px" width="12" height="15" viewBox="0 0 12 15" shape-rendering="crispEdges" ><path d="M0,1 H4 V9 Q4,10 6,10 V1 H10 V11 H7 V10 Q6,12 3,11 Q1,10 1,8 V2 H0 Z" fill="#a0a0a0"/><rect x="0" y="13" width="11" height="2" fill="#a0a0a0"/></svg>
<div style="position:absolute;left:315px;top:163px;width:1px;height:21px;background:#a0a0a0"></div>
<div style="position:absolute;left:316px;top:163px;width:1px;height:21px;background:#fff"></div>
<svg style="position:absolute;left:324px;top:168px" width="16" height="12" viewBox="0 0 16 12" shape-rendering="crispEdges" ><rect x="0" y="0" width="15" height="1" fill="#a0a0a0"/><rect x="0" y="3" width="12" height="1" fill="#a0a0a0"/><rect x="0" y="5" width="15" height="1" fill="#a0a0a0"/><rect x="0" y="8" width="12" height="1" fill="#a0a0a0"/><rect x="0" y="10" width="15" height="1" fill="#a0a0a0"/></svg>
<svg style="position:absolute;left:352px;top:168px" width="16" height="12" viewBox="0 0 16 12" shape-rendering="crispEdges" ><rect x="0" y="0" width="15" height="1" fill="#a0a0a0"/><rect x="2" y="3" width="11" height="1" fill="#a0a0a0"/><rect x="0" y="5" width="15" height="1" fill="#a0a0a0"/><rect x="2" y="8" width="11" height="1" fill="#a0a0a0"/><rect x="0" y="10" width="15" height="1" fill="#a0a0a0"/></svg>
<svg style="position:absolute;left:377px;top:168px" width="16" height="12" viewBox="0 0 16 12" shape-rendering="crispEdges" ><rect x="0" y="0" width="15" height="1" fill="#a0a0a0"/><rect x="3" y="3" width="12" height="1" fill="#a0a0a0"/><rect x="0" y="5" width="15" height="1" fill="#a0a0a0"/><rect x="3" y="8" width="12" height="1" fill="#a0a0a0"/><rect x="0" y="10" width="15" height="1" fill="#a0a0a0"/></svg>
<svg style="position:absolute;left:401px;top:165px" width="19" height="18" viewBox="0 0 19 18" shape-rendering="crispEdges" ><rect x="0" y="8" width="18" height="1" fill="#a0a0a0"/><rect x="8" y="0" width="1" height="17" fill="#a0a0a0"/><circle cx="8.5" cy="8.5" r="3" fill="none" stroke="#a0a0a0" shape-rendering="auto"/></svg>
<svg style="position:absolute;left:10px;top:196px" width="16" height="15" viewBox="0 0 16 15" shape-rendering="crispEdges" ><path d="M1.5,3.5 L11.5,13.5" fill="none" stroke="#2a8cff" stroke-width="1.2" shape-rendering="auto"/><path d="M7,1 H14 V8 L12,6 L7,11 L5,9 L10,4 Z" fill="#2a8cff"/></svg>
<svg style="position:absolute;left:43px;top:196px" width="17" height="14" viewBox="0 0 17 14" shape-rendering="crispEdges" ><rect x="0" y="0" width="15" height="1" fill="#3399ff"/><rect x="0" y="1" width="15" height="1" fill="#2266ee"/><rect x="0" y="2" width="15" height="1" fill="#0000a0"/><rect x="0" y="3" width="15" height="10" fill="#fff"/><rect x="0" y="3" width="1" height="10" fill="#d0d0d0"/><rect x="15" y="0" width="1" height="14" fill="#000"/><rect x="0" y="13" width="16" height="1" fill="#000"/><rect x="2" y="4" width="3" height="3" fill="#008080"/><rect x="3" y="5" width="1" height="1" fill="#00d0d0"/><rect x="2" y="8" width="2" height="1" fill="#808080"/><rect x="6" y="3" width="1" height="10" fill="#a0a0a0"/><rect x="8" y="4" width="5" height="1" fill="#a0a0a0"/><rect x="8" y="6" width="5" height="1" fill="#a0a0a0"/><rect x="8" y="8" width="5" height="1" fill="#a0a0a0"/><rect x="8" y="10" width="5" height="1" fill="#a0a0a0"/></svg>
<svg style="position:absolute;left:70px;top:196px" width="17" height="14" viewBox="0 0 17 14" shape-rendering="crispEdges" ><rect x="0" y="0" width="15" height="1" fill="#3399ff"/><rect x="0" y="1" width="15" height="1" fill="#2266ee"/><rect x="0" y="2" width="15" height="1" fill="#0000a0"/><rect x="0" y="3" width="15" height="10" fill="#fff"/><rect x="0" y="3" width="1" height="10" fill="#d0d0d0"/><rect x="15" y="0" width="1" height="14" fill="#000"/><rect x="0" y="13" width="16" height="1" fill="#000"/><rect x="2" y="4" width="3" height="3" fill="#008080"/><rect x="3" y="5" width="1" height="1" fill="#00d0d0"/><rect x="2" y="8" width="2" height="1" fill="#808080"/><rect x="6" y="3" width="1" height="10" fill="#a0a0a0"/><rect x="8" y="4" width="3" height="3" fill="#008080"/><rect x="9" y="5" width="1" height="1" fill="#00d0d0"/><rect x="12" y="4" width="3" height="3" fill="#008080"/><rect x="13" y="5" width="1" height="1" fill="#00d0d0"/><rect x="8" y="8" width="3" height="3" fill="#008080"/><rect x="9" y="9" width="1" height="1" fill="#00d000"/><rect x="12" y="8" width="3" height="3" fill="#a0a000"/><rect x="13" y="9" width="1" height="1" fill="#ffff00"/></svg>
<div style="position:absolute;left:115px;top:197px;width:13px;height:12px;background:#fafafa;box-shadow:1px 1px 0 #b0b0b0"></div>
<svg style="position:absolute;left:117px;top:199px" width="10" height="10" viewBox="0 0 10 10" shape-rendering="crispEdges" ><path d="M1,1.5 L9,8.5 M9,1.5 L1,8.5" fill="none" stroke="#000" stroke-width="1.8" shape-rendering="auto"/></svg>
<div style="position:absolute;left:0px;top:188px;width:272px;height:1px;background:#fff"></div>
<div style="position:absolute;left:0px;top:188px;width:1px;height:455px;background:#fff"></div>
<div style="position:absolute;left:271px;top:188px;width:1px;height:455px;background:#fff"></div>
<div style="position:absolute;left:33px;top:192px;width:1px;height:22px;background:#a0a0a0"></div>
<div style="position:absolute;left:34px;top:192px;width:1px;height:22px;background:#fff"></div>
<div style="position:absolute;left:95px;top:192px;width:1px;height:22px;background:#a0a0a0"></div>
<div style="position:absolute;left:96px;top:192px;width:1px;height:22px;background:#fff"></div>
<div style="position:absolute;left:103px;top:192px;width:1px;height:22px;background:#a0a0a0"></div>
<div style="position:absolute;left:104px;top:192px;width:1px;height:22px;background:#fff"></div>
<div style="position:absolute;left:0px;top:218px;width:269px;height:1px;background:#a0a0a0"></div>
<div style="position:absolute;left:0px;top:218px;width:1px;height:425px;background:#a0a0a0"></div>
<div style="position:absolute;left:1px;top:219px;width:1px;height:424px;background:#696969"></div>
<div style="position:absolute;left:2px;top:219px;width:267px;height:21px;background:#f0f0f0"></div>
<div style="position:absolute;left:2px;top:219px;width:267px;height:1px;background:#fff"></div>
<div style="position:absolute;left:51px;top:219px;width:1px;height:21px;background:#a0a0a0"></div>
<div style="position:absolute;left:52px;top:219px;width:1px;height:21px;background:#fff"></div>
<div style="position:absolute;left:211px;top:219px;width:1px;height:21px;background:#a0a0a0"></div>
<div style="position:absolute;left:212px;top:219px;width:1px;height:21px;background:#fff"></div>
<div style="position:absolute;left:268px;top:219px;width:1px;height:21px;background:#a0a0a0"></div>
<div style="position:absolute;left:2px;top:239px;width:267px;height:1px;background:#a0a0a0"></div>
<div style="position:absolute;left:2px;top:240px;width:267px;height:1px;background:#696969"></div>
<div style="position:absolute;left:8px;top:223px;white-space:nowrap;font-size:12px;line-height:16px;color:#000">编号</div>
<div style="position:absolute;left:58px;top:223px;white-space:nowrap;font-size:12px;line-height:16px;color:#000">名称</div>
<div style="position:absolute;left:218px;top:223px;white-space:nowrap;font-size:12px;line-height:16px;color:#000">大小</div>
<div style="position:absolute;left:2px;top:241px;width:265px;height:402px;background:#6699cc"></div>
<div style="position:absolute;left:2px;top:242px;width:265px;height:1px;background:#f4f7fb"></div>
<div style="position:absolute;left:2px;top:260px;width:265px;height:1px;background:#f4f7fb"></div>
<div style="position:absolute;left:2px;top:278px;width:265px;height:1px;background:#f4f7fb"></div>
<div style="position:absolute;left:2px;top:296px;width:265px;height:1px;background:#f4f7fb"></div>
<div style="position:absolute;left:2px;top:314px;width:265px;height:1px;background:#f4f7fb"></div>
<div style="position:absolute;left:2px;top:332px;width:265px;height:1px;background:#f4f7fb"></div>
<div style="position:absolute;left:2px;top:350px;width:265px;height:1px;background:#f4f7fb"></div>
<div style="position:absolute;left:2px;top:368px;width:265px;height:1px;background:#f4f7fb"></div>
<div style="position:absolute;left:2px;top:386px;width:265px;height:1px;background:#f4f7fb"></div>
<div style="position:absolute;left:2px;top:404px;width:265px;height:1px;background:#f4f7fb"></div>
<div style="position:absolute;left:2px;top:422px;width:265px;height:1px;background:#f4f7fb"></div>
<div style="position:absolute;left:2px;top:440px;width:265px;height:1px;background:#f4f7fb"></div>
<div style="position:absolute;left:2px;top:458px;width:265px;height:1px;background:#f4f7fb"></div>
<div style="position:absolute;left:2px;top:476px;width:265px;height:1px;background:#f4f7fb"></div>
<div style="position:absolute;left:2px;top:494px;width:265px;height:1px;background:#f4f7fb"></div>
<div style="position:absolute;left:2px;top:512px;width:265px;height:1px;background:#f4f7fb"></div>
<div style="position:absolute;left:2px;top:530px;width:265px;height:1px;background:#f4f7fb"></div>
<div style="position:absolute;left:2px;top:548px;width:265px;height:1px;background:#f4f7fb"></div>
<div style="position:absolute;left:2px;top:566px;width:265px;height:1px;background:#f4f7fb"></div>
<div style="position:absolute;left:2px;top:584px;width:265px;height:1px;background:#f4f7fb"></div>
<div style="position:absolute;left:2px;top:602px;width:265px;height:1px;background:#f4f7fb"></div>
<div style="position:absolute;left:2px;top:620px;width:265px;height:1px;background:#f4f7fb"></div>
<div style="position:absolute;left:2px;top:638px;width:265px;height:1px;background:#f4f7fb"></div>
<div style="position:absolute;left:2px;top:241px;width:265px;height:1px;background:#c8d8ea"></div>
<div style="position:absolute;left:52px;top:241px;width:1px;height:402px;background:#f4f7fb"></div>
<div style="position:absolute;left:212px;top:241px;width:1px;height:402px;background:#f4f7fb"></div>
<div style="position:absolute;left:267px;top:241px;width:2px;height:402px;background:#fff"></div>
<div style="position:absolute;left:272px;top:188px;width:839px;height:455px;background:#ababab"></div>
<div style="position:absolute;left:272px;top:188px;width:839px;height:1px;background:#a0a0a0"></div>
<div style="position:absolute;left:272px;top:188px;width:1px;height:455px;background:#a0a0a0"></div>
<div style="position:absolute;left:273px;top:189px;width:838px;height:1px;background:#696969"></div>
<div style="position:absolute;left:273px;top:189px;width:1px;height:454px;background:#696969"></div>
<div style="position:absolute;left:571px;top:301px;width:230px;height:185px;border-radius:7px;box-shadow:0 3px 15px 5px rgba(0,0,0,0.5)"></div>
<div style="position:absolute;left:571px;top:301px;width:228px;height:183px;border:1px solid #1c2229;border-radius:6px;overflow:hidden;
background:linear-gradient(180deg,#c2cfdd 0px,#b2c2d2 14px,#a9bacb 40px,#9fb3c7 90px,#8fa6bd 140px,#8299b3 183px);">
<div style="position:absolute;left:60px;top:-20px;width:60px;height:70px;background:linear-gradient(100deg,rgba(255,255,255,0) 0%,rgba(140,160,185,0.35) 50%,rgba(255,255,255,0) 100%);"></div>
<div style="position:absolute;left:1px;top:52px;width:5px;height:16px;background:linear-gradient(rgba(255,255,255,0.5),rgba(255,255,255,0.1))"></div>
<div style="position:absolute;right:1px;top:52px;width:5px;height:16px;background:linear-gradient(rgba(255,255,255,0.5),rgba(255,255,255,0.1))"></div>
<div style="position:absolute;left:0;top:0;right:0;bottom:0;border:1px solid rgba(255,255,255,0.85);border-radius:5px;"></div>
</div>
<div style="position:absolute;left:579px;top:307px;white-space:nowrap;font-size:12px;line-height:16px;color:#000">错误</div>
<div style="position:absolute;left:747px;top:301px;width:45px;height:18px;border:1px solid #4a1a14;border-radius:0 0 4px 4px;
background:linear-gradient(#eab0a6 0px,#e09a8e 7px,#d88676 8px,#c5432c 9px,#bf3d28 13px,#d26a52 18px);box-shadow:inset 0 0 0 1px rgba(255,220,210,0.55)"></div>
<svg style="position:absolute;left:764px;top:304px" width="15" height="13" viewBox="0 0 15 13" shape-rendering="crispEdges" shape-rendering="auto"><path d="M3,3 L12,10 M12,3 L3,10" stroke="#2e3a4c" stroke-width="4.6" fill="none" stroke-linecap="square"/>
<path d="M3,3 L12,10 M12,3 L3,10" stroke="#fafafa" stroke-width="2.6" fill="none" stroke-linecap="square"/></svg>
<div style="position:absolute;left:577px;top:329px;width:218px;height:151px;background:rgba(235,242,250,0.75)"></div>
<div style="position:absolute;left:578px;top:330px;width:216px;height:149px;background:#4a5866"></div>
<div style="position:absolute;left:579px;top:331px;width:214px;height:92px;background:#fff"></div>
<div style="position:absolute;left:579px;top:423px;width:214px;height:55px;background:#f0f0f0"></div>
<svg style="position:absolute;left:603px;top:360px" width="34" height="34" viewBox="0 0 34 34">
<defs><radialGradient id="eg" cx="40%" cy="30%" r="70%"><stop offset="0" stop-color="#f06060"/><stop offset="0.5" stop-color="#d01818"/><stop offset="1" stop-color="#8a0a0a"/></radialGradient></defs>
<circle cx="17" cy="17" r="16" fill="#d8d8d8" stroke="#8a8a8a" stroke-width="1"/>
<circle cx="17" cy="17" r="13.5" fill="url(#eg)" stroke="#7a1010" stroke-width="0.8"/>
<path d="M11,11 L23,23 M23,11 L11,23" stroke="#8a2a2a" stroke-width="5.5" stroke-linecap="square"/>
<path d="M11,11 L23,23 M23,11 L11,23" stroke="#f2f2f2" stroke-width="4" stroke-linecap="square"/>
</svg>
<div style="position:absolute;left:644px;top:368px;white-space:nowrap;font-size:12px;line-height:16px;color:#000">无法打开或读取文件.</div>
<div style="position:absolute;left:696px;top:435px;width:86px;height:28px;border:1px solid #6a6a6a;background:#f0f0f0;box-shadow:inset 1px 1px 0 #fff, inset -1px -1px 0 #a0a0a0, inset -2px -2px 0 #c8c8c8"></div>
<div style="position:absolute;left:728px;top:441px;white-space:nowrap;font-size:12px;line-height:16px;color:#000">确定</div>
</body></html>
